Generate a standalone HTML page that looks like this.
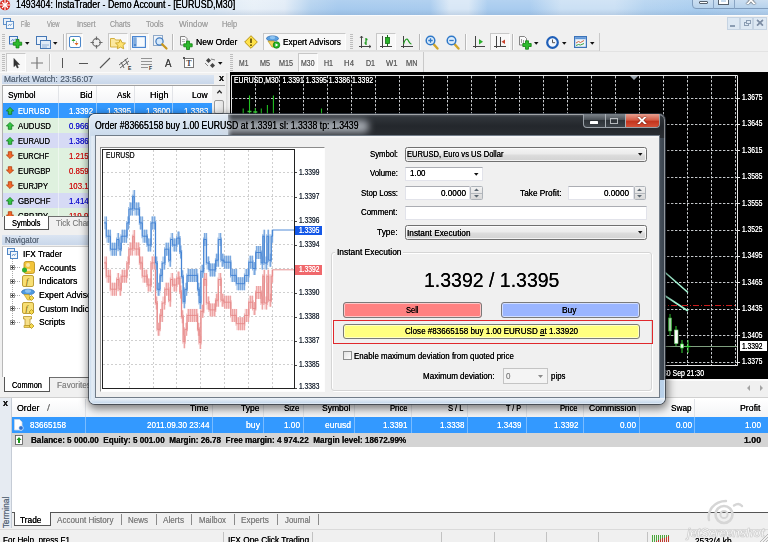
<!DOCTYPE html>
<html><head><meta charset="utf-8"><title>InstaTrader</title>
<style>
*{box-sizing:border-box;margin:0;padding:0}
html,body{width:768px;height:542px;overflow:hidden;background:#f0f0f0}
body{font-family:"Liberation Sans","DejaVu Sans",sans-serif;font-size:9.5px;color:#000;position:relative}
.a{position:absolute}
.t{white-space:pre;text-shadow:0 0 .25px currentColor}
svg{position:absolute;overflow:visible}
</style></head><body>
<div class="a" style="left:0;top:0;width:768px;height:15px;background:linear-gradient(rgba(255,255,255,.12),rgba(255,255,255,0) 60%,rgba(90,120,160,.18) 100%),linear-gradient(90deg,#d9e6f3 0,#dde9f5 28%,#e8f0f8 33%,#e2ecf7 37%,#b4d2ef 40.500%,#a6caee 44%,#a8cbee 56%,#d8e7f6 58.500%,#d8e7f6 61%,#a9ccef 63.500%,#a9ccef 69%,#cbe0f4 73%,#cbe0f4 80%,#b4d3f0 84%,#a9cdef 91%,#b5d3f0 100%)"></div>
<div class="a" style="left:0;top:15px;width:768px;height:1px;background:#fbfcfd"></div>
<svg style="left:0;top:-2px" width="13" height="14" viewBox="0 0 13 14"><circle cx="5" cy="7" r="5.2" fill="#d8261c"/><path d="M2 4l6 6M8 4l-6 6M5 2v10M0 7h10" stroke="#fff" stroke-width="1.1"/></svg>
<span class="a t" style="left:16.0px;top:-1.8px;font-size:10.2px;line-height:13px;color:#000;transform:scaleX(0.867);transform-origin:0 0;">1493404: InstaTrader - Demo Account - [EURUSD,M30]</span>
<div class="a" style="left:692px;top:-6px;width:80px;height:15px;border:1px solid #7f9cbd;border-radius:0 0 0 4px;background:linear-gradient(#d8e6f4,#b7d2ec)"></div>
<div class="a" style="left:713px;top:0px;width:1px;height:9px;background:#8aa5c4"></div>
<div class="a" style="left:734px;top:0px;width:1px;height:9px;background:#8aa5c4"></div>
<div class="a" style="left:699px;top:1px;width:9px;height:3px;background:#fff;border:1px solid #55606c;border-radius:1px"></div>
<div class="a" style="left:719px;top:-3px;width:9px;height:7px;border:2px solid #fff;outline:1px solid #55606c;outline-offset:0"></div>
<span class="a t" style="left:746.0px;top:-8.0px;font-size:12px;line-height:16px;color:#fff;transform:scaleX(1.495);transform-origin:0 0;font-weight:bold;text-shadow:0 0 1px #333,0 0 1px #333;">x</span>
<div class="a" style="left:0px;top:16px;width:768px;height:16px;background:#f0f0f0"></div>
<svg style="left:3px;top:18px" width="11" height="11" viewBox="0 0 11 11"><rect x=".5" y=".5" width="7" height="6" fill="#e9f1fa" stroke="#5d8fc9"/><rect x="3.5" y="3.5" width="7" height="7" fill="#f4f8fc" stroke="#5d8fc9"/><path d="M5 8l1.5-2 1 1.5 1.5-2" stroke="#5d8fc9" fill="none" stroke-width=".8"/></svg>
<span class="a t" style="left:21.0px;top:17.5px;font-size:9.5px;line-height:12px;color:#a3a3a3;transform:scaleX(0.588);transform-origin:0 0;">File</span>
<span class="a t" style="left:47.0px;top:17.5px;font-size:9.5px;line-height:12px;color:#a3a3a3;transform:scaleX(0.612);transform-origin:0 0;">View</span>
<span class="a t" style="left:77.0px;top:17.5px;font-size:9.5px;line-height:12px;color:#a3a3a3;transform:scaleX(0.778);transform-origin:0 0;">Insert</span>
<span class="a t" style="left:110.0px;top:17.5px;font-size:9.5px;line-height:12px;color:#a3a3a3;transform:scaleX(0.733);transform-origin:0 0;">Charts</span>
<span class="a t" style="left:146.0px;top:17.5px;font-size:9.5px;line-height:12px;color:#a3a3a3;transform:scaleX(0.789);transform-origin:0 0;">Tools</span>
<span class="a t" style="left:179.0px;top:17.5px;font-size:9.5px;line-height:12px;color:#a3a3a3;transform:scaleX(0.858);transform-origin:0 0;">Window</span>
<span class="a t" style="left:222.0px;top:17.5px;font-size:9.5px;line-height:12px;color:#a3a3a3;transform:scaleX(0.767);transform-origin:0 0;">Help</span>
<div class="a" style="left:727px;top:17px;width:13px;height:13px;background:#dde8f3;border:1px solid #c5d3e2"></div>
<div class="a" style="left:740px;top:17px;width:13px;height:13px;background:#dde8f3;border:1px solid #c5d3e2"></div>
<div class="a" style="left:753px;top:17px;width:14px;height:13px;background:#dde8f3;border:1px solid #c5d3e2"></div>
<div class="a" style="left:730px;top:25px;width:5px;height:2px;background:#8b9db3"></div>
<div class="a" style="left:743.5px;top:22px;width:5px;height:4px;border:1px solid #8b9db3"></div>
<div class="a" style="left:745.5px;top:20px;width:5px;height:4px;border:1px solid #8b9db3;background:#dde8f3"></div>
<span class="a t" style="left:756.0px;top:15.0px;font-size:12px;line-height:16px;color:#7f8fa6;transform:scaleX(1.140);transform-origin:0 0;font-weight:bold;">×</span>
<div class="a" style="left:0px;top:32px;width:768px;height:20px;background:#f0f0f0"></div>
<div class="a" style="left:0px;top:51px;width:768px;height:1px;background:#e3e3e3"></div>
<div class="a" style="left:0px;top:52px;width:768px;height:21px;background:#f0f0f0"></div>
<div class="a" style="left:2px;top:34px;width:3px;height:16px;background:repeating-linear-gradient(#bdbdbd 0 1px,#f0f0f0 1px 2px)"></div>
<svg style="left:9px;top:35px" width="14" height="14" viewBox="0 0 14 14"><rect x=".5" y="1.500" width="8" height="7.500" fill="#eaf2fb" stroke="#3f74b8"/><path d="M2 6.500l1.500-2 1.500 1 2-2" stroke="#3f74b8" fill="none" stroke-width=".8"/><path d="M7.0 4.499999999999999h3.0v2.7h2.7v3.0h-2.7v2.7h-3.0v-2.7h-2.7v-3.0h2.7z" fill="#2dbb2d" stroke="#0f7f0f" stroke-width=".8" stroke-linejoin="round"/></svg>
<svg style="left:25.3px;top:42.2px" width="4.500" height="2.700" viewBox="0 0 5 3"><path d="M0 0h5L2.5 3z" fill="#111"/></svg>
<svg style="left:36px;top:35px" width="15" height="14" viewBox="0 0 15 14"><rect x=".5" y="1.5" width="10" height="8" fill="#eaf2fb" stroke="#4577b5"/><rect x="4.5" y="5.5" width="10" height="8" fill="#dfeaf7" stroke="#4577b5"/><path d="M6 10h7M6 12h5" stroke="#7fa3d1" stroke-width=".8"/></svg>
<svg style="left:53.3px;top:42.2px" width="4.500" height="2.700" viewBox="0 0 5 3"><path d="M0 0h5L2.5 3z" fill="#111"/></svg>
<div class="a" style="left:63px;top:34px;width:1px;height:16px;background:#b9b9b9"></div>
<div class="a" style="left:64px;top:34px;width:1px;height:16px;background:#fbfbfb"></div>
<div class="a" style="left:66px;top:33px;width:17px;height:18px;background:#f8f8f8;border:1px solid #c8c8c8;border-right-color:#fdfdfd;border-bottom-color:#fdfdfd"></div>
<svg style="left:69px;top:36px" width="12" height="12" viewBox="0 0 12 12"><rect x=".5" y=".5" width="11" height="11" rx="1.5" fill="#fff" stroke="#4b86c9"/><path d="M2.5 5l2-2.5 2 2.5z" fill="#2fa52f"/><path d="M5.5 7l2 2.5 2-2.5z" fill="#e2661e"/><path d="M4.5 5v2M7.5 7v-2" stroke="#999" stroke-width=".7"/></svg>
<svg style="left:90px;top:36px" width="13" height="13" viewBox="0 0 13 13"><circle cx="6.5" cy="6.5" r="3.800" fill="none" stroke="#6a6a6a" stroke-width="1.200"/><path d="M6.5 .5v3.500M6.5 9v3.500M.5 6.5h3.500M9 6.5h3.500" stroke="#6a6a6a" stroke-width="1.200"/></svg>
<div class="a" style="left:108px;top:33px;width:20px;height:18px;background:#f8f8f8;border:1px solid #c8c8c8;border-right-color:#fdfdfd;border-bottom-color:#fdfdfd"></div>
<svg style="left:110px;top:35px" width="16" height="14" viewBox="0 0 16 14"><path d="M.5 3.5h4l1 1.5h4.500v7h-9.500z" fill="#fbe8a0" stroke="#d4b040"/><path d="M10.500 4.500l1.600 3.200 3.400.4-2.500 2.300.7 3.400-3.200-1.700-3.200 1.700.7-3.400-2.500-2.300 3.400-.4z" fill="#fde272" stroke="#c49a18" stroke-width=".8"/></svg>
<div class="a" style="left:130px;top:33px;width:19px;height:18px;background:#f8f8f8;border:1px solid #c8c8c8;border-right-color:#fdfdfd;border-bottom-color:#fdfdfd"></div>
<svg style="left:132px;top:36px" width="14" height="12" viewBox="0 0 14 12"><rect x=".6" y=".6" width="12.800" height="10.800" fill="#f5f9fd" stroke="#3f7fcf" stroke-width="1.100"/><rect x="1.5" y="1.500" width="3" height="9" fill="#4f8ad1"/><path d="M2 3h2M2 5h2M2 7h2" stroke="#dbe8f7" stroke-width=".7"/></svg>
<svg style="left:153px;top:35px" width="15" height="15" viewBox="0 0 15 15"><rect x=".5" y=".5" width="9" height="10" fill="#eef3f9" stroke="#8fa9c8"/><circle cx="6.500" cy="6.500" r="3.600" fill="#d5e8fa" stroke="#3f7ac0" stroke-width="1.200"/><path d="M9.200 9.200l4.300 4.300" stroke="#c9971c" stroke-width="2.200" stroke-linecap="round"/></svg>
<div class="a" style="left:172px;top:34px;width:1px;height:16px;background:#b9b9b9"></div>
<div class="a" style="left:173px;top:34px;width:1px;height:16px;background:#fbfbfb"></div>
<svg style="left:179px;top:35px" width="14" height="15" viewBox="0 0 14 15"><path d="M1.500 1.500h4.500l2 2v6.500h-6.500z" fill="#fafafa" stroke="#777" stroke-width=".9"/><path d="M3 4.500h3M3 6.500h3" stroke="#999" stroke-width=".7"/><path d="M7.5 6.1000000000000005h3.0v2.7h2.7v3.0h-2.7v2.7h-3.0v-2.7h-2.7v-3.0h2.7z" fill="#2dbb2d" stroke="#0f7f0f" stroke-width=".8" stroke-linejoin="round"/></svg>
<span class="a t" style="left:196.0px;top:36.0px;font-size:9.5px;line-height:12px;color:#000;transform:scaleX(0.903);transform-origin:0 0;">New Order</span>
<svg style="left:244px;top:35px" width="14" height="14" viewBox="0 0 14 14"><path d="M7 .7L13.300 7 7 13.300.7 7z" fill="#ffe24a" stroke="#b99412" stroke-width="1"/><path d="M7 3.500v4.500" stroke="#5a4a00" stroke-width="1.600"/><circle cx="7" cy="10.200" r=".9" fill="#5a4a00"/></svg>
<div class="a" style="left:263px;top:33px;width:83px;height:18px;background:#f8f8f8;border:1px solid #c8c8c8;border-right-color:#fdfdfd;border-bottom-color:#fdfdfd"></div>
<svg style="left:266px;top:35px" width="15" height="14" viewBox="0 0 15 14"><ellipse cx="6.500" cy="3.500" rx="6" ry="2.600" fill="#5aa0e0" stroke="#2f6fb5" stroke-width=".8"/><ellipse cx="6.500" cy="2.600" rx="2.800" ry="1.600" fill="#8cc3f2"/><path d="M2 6l4 6h4l-2-6z" fill="#f3d35a" stroke="#b8941a" stroke-width=".7"/><circle cx="10.500" cy="10" r="3.300" fill="#22b422" stroke="#0d7a0d" stroke-width=".7"/><path d="M9.500 8.300v3.400l2.800-1.700z" fill="#fff"/></svg>
<span class="a t" style="left:283.0px;top:36.0px;font-size:9.5px;line-height:12px;color:#000;transform:scaleX(0.879);transform-origin:0 0;">Expert Advisors</span>
<div class="a" style="left:350px;top:34px;width:3px;height:16px;background:repeating-linear-gradient(#bdbdbd 0 1px,#f0f0f0 1px 2px)"></div>
<svg style="left:359px;top:36px" width="12" height="13" viewBox="0 0 12 13"><path d="M2.500 0v12M0 10.500h12" stroke="#444" stroke-width="1"/><path d="M7 2v7M5.500 7h1.500M7 3.500h1.500" stroke="#1f9a1f" stroke-width="1.300"/><path d="M1 2l1.500-2 1.500 2M10 9l2 1.500-2 1.500" fill="none" stroke="#444" stroke-width=".8"/></svg>
<div class="a" style="left:376px;top:33px;width:20px;height:18px;background:#f8f8f8;border:1px solid #c8c8c8;border-right-color:#fdfdfd;border-bottom-color:#fdfdfd"></div>
<svg style="left:380px;top:35px" width="12" height="14" viewBox="0 0 12 14"><path d="M2.500 1v12M0 11.500h12" stroke="#444" stroke-width="1"/><path d="M7.500 0v11" stroke="#156f15" stroke-width="1"/><rect x="5.500" y="2.500" width="4" height="6" fill="#28b428" stroke="#156f15" stroke-width=".8"/></svg>
<svg style="left:401px;top:36px" width="12" height="13" viewBox="0 0 12 13"><path d="M2.500 0v12M0 10.500h12" stroke="#444" stroke-width="1"/><path d="M2.500 8C4 3 6 2 7 4s2 4 3.500 4" fill="none" stroke="#1f9a1f" stroke-width="1.200"/></svg>
<div class="a" style="left:419px;top:34px;width:1px;height:16px;background:#b9b9b9"></div>
<div class="a" style="left:420px;top:34px;width:1px;height:16px;background:#fbfbfb"></div>
<svg style="left:425px;top:35px" width="14" height="15" viewBox="0 0 14 15"><path d="M8 8.500l4.500 5" stroke="#d0a52a" stroke-width="2.400" stroke-linecap="round"/><circle cx="5.500" cy="5.500" r="4.300" fill="#dcecfb" stroke="#2f78c8" stroke-width="1.500"/><path d="M3.300 5.500h4.400M5.500 3.300v4.400" stroke="#2f78c8" stroke-width="1.300"/></svg>
<svg style="left:446px;top:35px" width="14" height="15" viewBox="0 0 14 15"><path d="M8 8.500l4.500 5" stroke="#d0a52a" stroke-width="2.400" stroke-linecap="round"/><circle cx="5.500" cy="5.500" r="4.300" fill="#dcecfb" stroke="#2f78c8" stroke-width="1.500"/><path d="M3.300 5.500h4.400" stroke="#2f78c8" stroke-width="1.300"/></svg>
<div class="a" style="left:465px;top:34px;width:1px;height:16px;background:#b9b9b9"></div>
<div class="a" style="left:466px;top:34px;width:1px;height:16px;background:#fbfbfb"></div>
<svg style="left:473px;top:36px" width="12" height="13" viewBox="0 0 12 13"><path d="M2.500 0v12M0 10.500h12" stroke="#444" stroke-width="1"/><path d="M6 3v5.500l4-2.700z" fill="#2cae2c"/></svg>
<div class="a" style="left:490px;top:33px;width:20px;height:18px;background:#f8f8f8;border:1px solid #c8c8c8;border-right-color:#fdfdfd;border-bottom-color:#fdfdfd"></div>
<svg style="left:494px;top:36px" width="12" height="13" viewBox="0 0 12 13"><path d="M2.500 0v12M0 10.500h12M6.500 1v9" stroke="#444" stroke-width="1"/><path d="M11 3.500v4.500l-3.500-2.200z" fill="#c8402a"/></svg>
<div class="a" style="left:512px;top:34px;width:1px;height:16px;background:#b9b9b9"></div>
<div class="a" style="left:513px;top:34px;width:1px;height:16px;background:#fbfbfb"></div>
<svg style="left:519px;top:35px" width="14" height="15" viewBox="0 0 14 15"><path d="M.5 1.500h5l2 2v6.500h-7z" fill="#fafafa" stroke="#777" stroke-width=".9"/><path d="M2.500 4v4M4.500 5v4" stroke="#888" stroke-width=".8"/><path d="M6.5 5.8h3.0v2.7h2.7v3.0h-2.7v2.7h-3.0v-2.7h-2.7v-3.0h2.7z" fill="#2dbb2d" stroke="#0f7f0f" stroke-width=".8" stroke-linejoin="round"/></svg>
<svg style="left:534.3px;top:42.2px" width="4.500" height="2.700" viewBox="0 0 5 3"><path d="M0 0h5L2.5 3z" fill="#111"/></svg>
<svg style="left:546px;top:36px" width="13" height="13" viewBox="0 0 13 13"><circle cx="6.500" cy="6.500" r="5.300" fill="#f4f8fd" stroke="#1f5fb8" stroke-width="2.200"/><path d="M6.500 3.500v3.200h2.600" stroke="#555" fill="none" stroke-width="1"/></svg>
<svg style="left:562.3px;top:42.2px" width="4.500" height="2.700" viewBox="0 0 5 3"><path d="M0 0h5L2.5 3z" fill="#111"/></svg>
<svg style="left:574px;top:36px" width="13" height="12" viewBox="0 0 13 12"><rect x=".6" y=".6" width="11.800" height="10.800" fill="#eef4fb" stroke="#3b73b9" stroke-width="1.200"/><rect x="1.200" y="1.200" width="10.600" height="2" fill="#5d94d6"/><path d="M2 7l2.500-1.500 2 1 3.500-2" stroke="#d05a2a" fill="none" stroke-width=".9"/><path d="M2 9.500l2.500-1 2 .5 3.500-1.500" stroke="#2a9a2a" fill="none" stroke-width=".9"/></svg>
<svg style="left:590.3px;top:42.2px" width="4.500" height="2.700" viewBox="0 0 5 3"><path d="M0 0h5L2.5 3z" fill="#111"/></svg>
<div class="a" style="left:599px;top:33px;width:1px;height:18px;background:#c9c9c9"></div>
<div class="a" style="left:0px;top:50px;width:599px;height:1px;background:#e0e0e0"></div>
<div class="a" style="left:2px;top:54px;width:3px;height:17px;background:repeating-linear-gradient(#bdbdbd 0 1px,#f0f0f0 1px 2px)"></div>
<div class="a" style="left:6px;top:53px;width:20px;height:19px;background:#f8f8f8;border:1px solid #c8c8c8;border-right-color:#fdfdfd;border-bottom-color:#fdfdfd"></div>
<svg style="left:12.500px;top:57.500px" width="7" height="10.500" viewBox="0 0 8 12"><path d="M1 .5v9.500l2.200-2 1.600 3.500 1.400-.6-1.600-3.400h3z" fill="#333" stroke="#222" stroke-width=".5"/></svg>
<svg style="left:31px;top:57px" width="12" height="12" viewBox="0 0 12 12"><path d="M6 0v12M0 6h12" stroke="#777" stroke-width="1.200"/></svg>
<div class="a" style="left:49px;top:54px;width:1px;height:17px;background:#b9b9b9"></div>
<div class="a" style="left:50px;top:54px;width:1px;height:17px;background:#fbfbfb"></div>
<div class="a" style="left:62px;top:58px;width:1px;height:10px;background:#555"></div>
<div class="a" style="left:79px;top:62.5px;width:9px;height:1px;background:#555"></div>
<svg style="left:100px;top:58px" width="10" height="10" viewBox="0 0 10 10"><path d="M0 10L10 0" stroke="#555" stroke-width="1.100"/></svg>
<svg style="left:119px;top:57px" width="13" height="13" viewBox="0 0 13 13"><path d="M0 8L9 1M1 11L10 4M2 5l3 6M6 2l3 6" stroke="#555" stroke-width=".9"/><text x="9" y="13" font-size="5" font-weight="bold" fill="#333" font-family="Liberation Sans,sans-serif">E</text></svg>
<svg style="left:141px;top:57px" width="12" height="13" viewBox="0 0 12 13"><path d="M0 1.500h11M0 4.500h11M0 7.500h11M0 10.500h7" stroke="#888" stroke-width=".9"/><text x="8" y="13" font-size="5" font-weight="bold" fill="#333" font-family="Liberation Sans,sans-serif">F</text></svg>
<span class="a t" style="left:165.0px;top:56.0px;font-size:10.5px;line-height:14px;color:#444;transform:scaleX(0.927);transform-origin:0 0;">A</span>
<svg style="left:183px;top:57px" width="11" height="12" viewBox="0 0 11 12"><rect x="1.500" y="1.500" width="9" height="9" fill="#fff" stroke="#777"/><rect x="0" y="0" width="2" height="2" fill="#555"/><text x="3.200" y="9.300" font-size="8" font-weight="bold" fill="#444" font-family="Liberation Serif,serif">T</text></svg>
<svg style="left:205px;top:57px" width="11" height="12" viewBox="0 0 11 12"><path d="M1 3.500l2.500-2.500 2.500 2.500-2.500 2.500z" fill="#444"/><path d="M5 8.500l2.500-2.500 2.500 2.500-2.500 2.500z" fill="#444"/><path d="M0 6l3 3M6 2l4 1" stroke="#666" stroke-width=".8"/></svg>
<svg style="left:218.3px;top:62.2px" width="4.500" height="2.700" viewBox="0 0 5 3"><path d="M0 0h5L2.5 3z" fill="#111"/></svg>
<div class="a" style="left:230px;top:54px;width:3px;height:17px;background:repeating-linear-gradient(#bdbdbd 0 1px,#f0f0f0 1px 2px)"></div>
<div class="a" style="left:298px;top:53px;width:20px;height:19px;background:#f8f8f8;border:1px solid #c8c8c8;border-right-color:#fdfdfd;border-bottom-color:#fdfdfd"></div>
<span class="a t" style="left:239.0px;top:57.0px;font-size:9px;line-height:12px;color:#666;transform:scaleX(0.759);transform-origin:0 0;">M1</span>
<span class="a t" style="left:260.0px;top:57.0px;font-size:9px;line-height:12px;color:#666;transform:scaleX(0.799);transform-origin:0 0;">M5</span>
<span class="a t" style="left:279.0px;top:57.0px;font-size:9px;line-height:12px;color:#666;transform:scaleX(0.799);transform-origin:0 0;">M15</span>
<span class="a t" style="left:301.0px;top:57.0px;font-size:9px;line-height:12px;color:#666;transform:scaleX(0.771);transform-origin:0 0;">M30</span>
<span class="a t" style="left:324.0px;top:57.0px;font-size:9px;line-height:12px;color:#666;transform:scaleX(0.782);transform-origin:0 0;">H1</span>
<span class="a t" style="left:343.5px;top:57.0px;font-size:9px;line-height:12px;color:#666;transform:scaleX(0.868);transform-origin:0 0;">H4</span>
<span class="a t" style="left:366.0px;top:57.0px;font-size:9px;line-height:12px;color:#666;transform:scaleX(0.782);transform-origin:0 0;">D1</span>
<span class="a t" style="left:386.0px;top:57.0px;font-size:9px;line-height:12px;color:#666;transform:scaleX(0.852);transform-origin:0 0;">W1</span>
<span class="a t" style="left:406.0px;top:57.0px;font-size:9px;line-height:12px;color:#666;transform:scaleX(0.821);transform-origin:0 0;">MN</span>
<div class="a" style="left:423px;top:52px;width:1px;height:21px;background:#c9c9c9"></div>
<div class="a" style="left:0px;top:72px;width:229px;height:1px;background:#fafafa"></div>
<div class="a" style="left:0px;top:73px;width:229px;height:161px;background:#f0f0f0"></div>
<div class="a" style="left:2px;top:74.5px;width:212px;height:9.5px;background:linear-gradient(#dbe5f2,#c9d7ea)"></div>
<span class="a t" style="left:4.0px;top:72.5px;font-size:9.5px;line-height:12px;color:#5c6a7c;transform:scaleX(0.885);transform-origin:0 0;">Market Watch: 23:56:07</span>
<span class="a t" style="left:218.5px;top:72.0px;font-size:9.5px;line-height:12px;color:#111;transform:scaleX(0.944);transform-origin:0 0;font-weight:bold;">x</span>
<div class="a" style="left:2px;top:85px;width:223px;height:132px;background:#fff;border-left:1px solid #b0b0b0;border-top:1px solid #a0a0a0"></div>
<div class="a" style="left:3px;top:86px;width:209px;height:17px;background:linear-gradient(#ffffff,#f4f5f7)"></div>
<div class="a" style="left:58px;top:86px;width:1px;height:17px;background:#e2e4e8"></div>
<div class="a" style="left:96px;top:86px;width:1px;height:17px;background:#e2e4e8"></div>
<div class="a" style="left:134px;top:86px;width:1px;height:17px;background:#e2e4e8"></div>
<div class="a" style="left:172px;top:86px;width:1px;height:17px;background:#e2e4e8"></div>
<span class="a t" style="left:7.5px;top:88.5px;font-size:9.5px;line-height:12px;color:#000;transform:scaleX(0.868);transform-origin:0 0;">Symbol</span>
<span class="a t" style="left:80.0px;top:88.5px;font-size:9.5px;line-height:12px;color:#000;transform:scaleX(0.910);transform-origin:0 0;">Bid</span>
<span class="a t" style="left:117.0px;top:88.5px;font-size:9.5px;line-height:12px;color:#000;transform:scaleX(0.852);transform-origin:0 0;">Ask</span>
<span class="a t" style="left:150.0px;top:88.5px;font-size:9.5px;line-height:12px;color:#000;transform:scaleX(0.946);transform-origin:0 0;">High</span>
<span class="a t" style="left:192.0px;top:88.5px;font-size:9.5px;line-height:12px;color:#000;transform:scaleX(0.889);transform-origin:0 0;">Low</span>
<div class="a" style="left:212px;top:86px;width:13px;height:131px;background:#f0f0f0"></div>
<svg style="left:217px;top:90px" width="5" height="4" viewBox="0 0 5 4"><path d="M.3 3.200L2.500 .8 4.700 3.200" fill="none" stroke="#333" stroke-width="1.300"/></svg>
<div class="a" style="left:213.5px;top:100px;width:10px;height:14px;background:linear-gradient(90deg,#f6f6f6,#e3e3e3);border:1px solid #9a9a9a;border-radius:2px"></div>
<div class="a" style="left:3px;top:103px;width:209px;height:15px;background:#3399ff;overflow:hidden"></div>
<div class="a" style="left:58px;top:103px;width:1px;height:15px;background:rgba(255,255,255,.45)"></div>
<div class="a" style="left:96px;top:103px;width:1px;height:15px;background:rgba(255,255,255,.45)"></div>
<div class="a" style="left:134px;top:103px;width:1px;height:15px;background:rgba(255,255,255,.45)"></div>
<div class="a" style="left:172px;top:103px;width:1px;height:15px;background:rgba(255,255,255,.45)"></div>
<svg style="left:6px;top:106.7px" width="8" height="8" viewBox="0 0 8 8"><path d="M4 .4L7.600 4H5.700V7.300H2.300V4H.4z" fill="#35c545" stroke="#127a1c" stroke-width=".8" stroke-linejoin="round"/></svg>
<span class="a t" style="left:18.0px;top:104.5px;font-size:9.5px;line-height:12px;color:#fff;transform:scaleX(0.798);transform-origin:0 0;">EURUSD</span>
<span class="a t" style="left:69.0px;top:104.5px;font-size:9.5px;line-height:12px;color:#fff;transform:scaleX(0.826);transform-origin:0 0;">1.3392</span>
<span class="a t" style="left:107.0px;top:104.5px;font-size:9.5px;line-height:12px;color:#fff;transform:scaleX(0.826);transform-origin:0 0;">1.3395</span>
<span class="a t" style="left:145.5px;top:104.5px;font-size:9.5px;line-height:12px;color:#fff;transform:scaleX(0.843);transform-origin:0 0;">1.3600</span>
<span class="a t" style="left:183.5px;top:104.5px;font-size:9.5px;line-height:12px;color:#fff;transform:scaleX(0.843);transform-origin:0 0;">1.3383</span>
<div class="a" style="left:3px;top:118px;width:209px;height:15px;background:#dff1df;overflow:hidden"></div>
<div class="a" style="left:58px;top:118px;width:1px;height:15px;background:rgba(255,255,255,.45)"></div>
<div class="a" style="left:96px;top:118px;width:1px;height:15px;background:rgba(255,255,255,.45)"></div>
<div class="a" style="left:134px;top:118px;width:1px;height:15px;background:rgba(255,255,255,.45)"></div>
<div class="a" style="left:172px;top:118px;width:1px;height:15px;background:rgba(255,255,255,.45)"></div>
<svg style="left:6px;top:121.7px" width="8" height="8" viewBox="0 0 8 8"><path d="M4 .4L7.600 4H5.700V7.300H2.300V4H.4z" fill="#35c545" stroke="#127a1c" stroke-width=".8" stroke-linejoin="round"/></svg>
<span class="a t" style="left:18.0px;top:119.5px;font-size:9.5px;line-height:12px;color:#111;transform:scaleX(0.822);transform-origin:0 0;">AUDUSD</span>
<span class="a t" style="left:69.0px;top:119.5px;font-size:9.5px;line-height:12px;color:#1a1ad0;transform:scaleX(0.826);transform-origin:0 0;">0.9668</span>
<div class="a" style="left:3px;top:133px;width:209px;height:15px;background:#d6daf5;overflow:hidden"></div>
<div class="a" style="left:58px;top:133px;width:1px;height:15px;background:rgba(255,255,255,.45)"></div>
<div class="a" style="left:96px;top:133px;width:1px;height:15px;background:rgba(255,255,255,.45)"></div>
<div class="a" style="left:134px;top:133px;width:1px;height:15px;background:rgba(255,255,255,.45)"></div>
<div class="a" style="left:172px;top:133px;width:1px;height:15px;background:rgba(255,255,255,.45)"></div>
<svg style="left:6px;top:136.7px" width="8" height="8" viewBox="0 0 8 8"><path d="M4 .4L7.600 4H5.700V7.300H2.300V4H.4z" fill="#35c545" stroke="#127a1c" stroke-width=".8" stroke-linejoin="round"/></svg>
<span class="a t" style="left:18.0px;top:134.5px;font-size:9.5px;line-height:12px;color:#111;transform:scaleX(0.798);transform-origin:0 0;">EURAUD</span>
<span class="a t" style="left:69.0px;top:134.5px;font-size:9.5px;line-height:12px;color:#1a1ad0;transform:scaleX(0.826);transform-origin:0 0;">1.3861</span>
<div class="a" style="left:3px;top:148px;width:209px;height:15px;background:#dff1df;overflow:hidden"></div>
<div class="a" style="left:58px;top:148px;width:1px;height:15px;background:rgba(255,255,255,.45)"></div>
<div class="a" style="left:96px;top:148px;width:1px;height:15px;background:rgba(255,255,255,.45)"></div>
<div class="a" style="left:134px;top:148px;width:1px;height:15px;background:rgba(255,255,255,.45)"></div>
<div class="a" style="left:172px;top:148px;width:1px;height:15px;background:rgba(255,255,255,.45)"></div>
<svg style="left:6px;top:151.3px" width="8" height="8" viewBox="0 0 8 8"><path d="M4 7.600L7.600 4H5.700V.7H2.300V4H.4z" fill="#f2682a" stroke="#b23a0a" stroke-width=".8" stroke-linejoin="round"/></svg>
<span class="a t" style="left:18.0px;top:149.5px;font-size:9.5px;line-height:12px;color:#111;transform:scaleX(0.783);transform-origin:0 0;">EURCHF</span>
<span class="a t" style="left:69.0px;top:149.5px;font-size:9.5px;line-height:12px;color:#d01a1a;transform:scaleX(0.826);transform-origin:0 0;">1.2156</span>
<div class="a" style="left:3px;top:163px;width:209px;height:15px;background:#dff1df;overflow:hidden"></div>
<div class="a" style="left:58px;top:163px;width:1px;height:15px;background:rgba(255,255,255,.45)"></div>
<div class="a" style="left:96px;top:163px;width:1px;height:15px;background:rgba(255,255,255,.45)"></div>
<div class="a" style="left:134px;top:163px;width:1px;height:15px;background:rgba(255,255,255,.45)"></div>
<div class="a" style="left:172px;top:163px;width:1px;height:15px;background:rgba(255,255,255,.45)"></div>
<svg style="left:6px;top:166.3px" width="8" height="8" viewBox="0 0 8 8"><path d="M4 7.600L7.600 4H5.700V.7H2.300V4H.4z" fill="#f2682a" stroke="#b23a0a" stroke-width=".8" stroke-linejoin="round"/></svg>
<span class="a t" style="left:18.0px;top:164.5px;font-size:9.5px;line-height:12px;color:#111;transform:scaleX(0.810);transform-origin:0 0;">EURGBP</span>
<span class="a t" style="left:69.0px;top:164.5px;font-size:9.5px;line-height:12px;color:#d01a1a;transform:scaleX(0.826);transform-origin:0 0;">0.8592</span>
<div class="a" style="left:3px;top:178px;width:209px;height:15px;background:#dff1df;overflow:hidden"></div>
<div class="a" style="left:58px;top:178px;width:1px;height:15px;background:rgba(255,255,255,.45)"></div>
<div class="a" style="left:96px;top:178px;width:1px;height:15px;background:rgba(255,255,255,.45)"></div>
<div class="a" style="left:134px;top:178px;width:1px;height:15px;background:rgba(255,255,255,.45)"></div>
<div class="a" style="left:172px;top:178px;width:1px;height:15px;background:rgba(255,255,255,.45)"></div>
<svg style="left:6px;top:181.3px" width="8" height="8" viewBox="0 0 8 8"><path d="M4 7.600L7.600 4H5.700V.7H2.300V4H.4z" fill="#f2682a" stroke="#b23a0a" stroke-width=".8" stroke-linejoin="round"/></svg>
<span class="a t" style="left:18.0px;top:179.5px;font-size:9.5px;line-height:12px;color:#111;transform:scaleX(0.800);transform-origin:0 0;">EURJPY</span>
<span class="a t" style="left:69.0px;top:179.5px;font-size:9.5px;line-height:12px;color:#d01a1a;transform:scaleX(0.826);transform-origin:0 0;">103.18</span>
<div class="a" style="left:3px;top:193px;width:209px;height:15px;background:#d6daf5;overflow:hidden"></div>
<div class="a" style="left:58px;top:193px;width:1px;height:15px;background:rgba(255,255,255,.45)"></div>
<div class="a" style="left:96px;top:193px;width:1px;height:15px;background:rgba(255,255,255,.45)"></div>
<div class="a" style="left:134px;top:193px;width:1px;height:15px;background:rgba(255,255,255,.45)"></div>
<div class="a" style="left:172px;top:193px;width:1px;height:15px;background:rgba(255,255,255,.45)"></div>
<svg style="left:6px;top:196.7px" width="8" height="8" viewBox="0 0 8 8"><path d="M4 .4L7.600 4H5.700V7.300H2.300V4H.4z" fill="#35c545" stroke="#127a1c" stroke-width=".8" stroke-linejoin="round"/></svg>
<span class="a t" style="left:18.0px;top:194.5px;font-size:9.5px;line-height:12px;color:#111;transform:scaleX(0.821);transform-origin:0 0;">GBPCHF</span>
<span class="a t" style="left:69.0px;top:194.5px;font-size:9.5px;line-height:12px;color:#1a1ad0;transform:scaleX(0.826);transform-origin:0 0;">1.4146</span>
<div class="a" style="left:3px;top:208px;width:209px;height:8px;background:#dff1df;overflow:hidden"></div>
<div class="a" style="left:58px;top:208px;width:1px;height:8px;background:rgba(255,255,255,.45)"></div>
<div class="a" style="left:96px;top:208px;width:1px;height:8px;background:rgba(255,255,255,.45)"></div>
<div class="a" style="left:134px;top:208px;width:1px;height:8px;background:rgba(255,255,255,.45)"></div>
<div class="a" style="left:172px;top:208px;width:1px;height:8px;background:rgba(255,255,255,.45)"></div>
<div class="a" style="left:3px;top:208px;width:210px;height:8px;overflow:hidden">
<svg style="left:3px;top:3.3000000000000114px" width="8" height="8" viewBox="0 0 8 8"><path d="M4 7.600L7.600 4H5.700V.7H2.300V4H.4z" fill="#f2682a" stroke="#b23a0a" stroke-width=".8" stroke-linejoin="round"/></svg>
<span class="a t" style="left:15.0px;top:1.5px;font-size:9.5px;line-height:12px;color:#111;transform:scaleX(0.800);transform-origin:0 0;">GBPJPY</span>
<span class="a t" style="left:66.0px;top:1.5px;font-size:9.5px;line-height:12px;color:#d01a1a;transform:scaleX(0.846);transform-origin:0 0;">119.98</span>
</div>
<div class="a" style="left:4px;top:216px;width:225px;height:1px;background:#6e6e6e"></div>
<div class="a" style="left:0px;top:217px;width:229px;height:17px;background:#f0f0f0"></div>
<div class="a" style="left:4px;top:216px;width:45px;height:14px;background:#fff;border:1px solid #555;border-top:none"></div>
<span class="a t" style="left:11.5px;top:216.5px;font-size:9.5px;line-height:12px;color:#000;transform:scaleX(0.782);transform-origin:0 0;">Symbols</span>
<span class="a t" style="left:56.0px;top:216.5px;font-size:9.5px;line-height:12px;color:#8a8a8a;transform:scaleX(0.838);transform-origin:0 0;">Tick Chart</span>
<div class="a" style="left:0px;top:234px;width:229px;height:163px;background:#f0f0f0"></div>
<div class="a" style="left:2px;top:235px;width:212px;height:10px;background:linear-gradient(#dbe5f2,#c9d7ea)"></div>
<span class="a t" style="left:4.5px;top:234.0px;font-size:9.5px;line-height:12px;color:#5c6a7c;transform:scaleX(0.836);transform-origin:0 0;">Navigator</span>
<div class="a" style="left:2px;top:246px;width:223px;height:131px;background:#fff;border-left:1px solid #b8b8b8;border-top:1px solid #d0d0d0"></div>
<svg style="left:7px;top:248px" width="11" height="11" viewBox="0 0 11 11"><rect x=".5" y=".5" width="7" height="6" fill="#e9f1fa" stroke="#4f86c6"/><rect x="3.500" y="3.500" width="7" height="7" fill="#f4f8fc" stroke="#4f86c6"/><path d="M5 8l1.500-2 1 1.500 1.500-2" stroke="#4f86c6" fill="none" stroke-width=".8"/></svg>
<span class="a t" style="left:23.0px;top:248.0px;font-size:9.5px;line-height:12px;color:#000;transform:scaleX(0.869);transform-origin:0 0;">IFX Trader</span>
<div class="a" style="left:12px;top:259px;width:1px;height:61px;background:repeating-linear-gradient(#aaa 0 1px,#fff 1px 2px)"></div>
<div class="a" style="left:10px;top:265.0px;width:5px;height:5px;border:1px solid #9a9a9a;background:#fff"></div>
<div class="a" style="left:11px;top:267.0px;width:3px;height:1px;background:#444"></div>
<div class="a" style="left:12px;top:266.0px;width:1px;height:3px;background:#444"></div>
<div class="a" style="left:15px;top:267.0px;width:5px;height:1px;background:repeating-linear-gradient(90deg,#aaa 0 1px,#fff 1px 2px)"></div>
<div class="a" style="left:10px;top:278.5px;width:5px;height:5px;border:1px solid #9a9a9a;background:#fff"></div>
<div class="a" style="left:11px;top:280.5px;width:3px;height:1px;background:#444"></div>
<div class="a" style="left:12px;top:279.5px;width:1px;height:3px;background:#444"></div>
<div class="a" style="left:15px;top:280.5px;width:5px;height:1px;background:repeating-linear-gradient(90deg,#aaa 0 1px,#fff 1px 2px)"></div>
<div class="a" style="left:10px;top:292.5px;width:5px;height:5px;border:1px solid #9a9a9a;background:#fff"></div>
<div class="a" style="left:11px;top:294.5px;width:3px;height:1px;background:#444"></div>
<div class="a" style="left:12px;top:293.5px;width:1px;height:3px;background:#444"></div>
<div class="a" style="left:15px;top:294.5px;width:5px;height:1px;background:repeating-linear-gradient(90deg,#aaa 0 1px,#fff 1px 2px)"></div>
<div class="a" style="left:10px;top:306.0px;width:5px;height:5px;border:1px solid #9a9a9a;background:#fff"></div>
<div class="a" style="left:11px;top:308.0px;width:3px;height:1px;background:#444"></div>
<div class="a" style="left:12px;top:307.0px;width:1px;height:3px;background:#444"></div>
<div class="a" style="left:15px;top:308.0px;width:5px;height:1px;background:repeating-linear-gradient(90deg,#aaa 0 1px,#fff 1px 2px)"></div>
<div class="a" style="left:10px;top:319.5px;width:5px;height:5px;border:1px solid #9a9a9a;background:#fff"></div>
<div class="a" style="left:11px;top:321.5px;width:3px;height:1px;background:#444"></div>
<div class="a" style="left:12px;top:320.5px;width:1px;height:3px;background:#444"></div>
<div class="a" style="left:15px;top:321.5px;width:5px;height:1px;background:repeating-linear-gradient(90deg,#aaa 0 1px,#fff 1px 2px)"></div>
<svg style="left:21px;top:261px" width="14" height="13" viewBox="0 0 14 13"><rect x="3" y=".5" width="10.500" height="12" rx="2" fill="#f2c43a" stroke="#b48a14" stroke-width=".8"/><circle cx="7" cy="4" r="2" fill="#fbe7a8"/><path d="M4 10c0-3 6-3 6 0z" fill="#fbe7a8"/><circle cx="3.500" cy="9" r="2.500" fill="#30b030"/></svg>
<svg style="left:22px;top:275px" width="12" height="12" viewBox="0 0 12 12"><rect x=".5" y=".5" width="11" height="11" rx="1.500" fill="#f8df74" stroke="#b8962a" stroke-width=".9"/><text x="4" y="9" font-size="8" font-style="italic" font-family="Liberation Serif,serif" fill="#6a5200">f</text></svg>
<svg style="left:21px;top:288px" width="14" height="13" viewBox="0 0 14 13"><ellipse cx="7" cy="4" rx="6.500" ry="2.800" fill="#4f9ae0" stroke="#2f6fb5" stroke-width=".7"/><ellipse cx="7" cy="3" rx="3" ry="1.800" fill="#8cc3f2"/><path d="M3 6.500l3.500 5.500h3.500l-2-5.500z" fill="#f3d35a" stroke="#b8941a" stroke-width=".6"/><path d="M10.500 7.500l2.500 2.500-2.500 2.500-2.500-2.500z" fill="#f5d94e" stroke="#a8860f" stroke-width=".7"/></svg>
<svg style="left:22px;top:302px" width="13" height="13" viewBox="0 0 13 13"><rect x=".5" y=".5" width="11" height="11" rx="1.500" fill="#f8df74" stroke="#b8962a" stroke-width=".9"/><text x="3.500" y="9" font-size="8" font-style="italic" font-family="Liberation Serif,serif" fill="#6a5200">f</text><path d="M9.500 7.500l2.500 2.500-2.500 2.500-2.500-2.500z" fill="#f5d94e" stroke="#a8860f" stroke-width=".7"/></svg>
<svg style="left:22px;top:316px" width="13" height="13" viewBox="0 0 13 13"><path d="M1.500 .5h8v2.500h-1.500v6.500h-5v-6.500h-1.500z" fill="#f7e08a" stroke="#b8962a" stroke-width=".8"/><path d="M2 9.500h7v2h-7z" fill="#f3d35a" stroke="#b8962a" stroke-width=".7"/><path d="M9.500 7.500l2.500 2.500-2.500 2.500-2.500-2.500z" fill="#f5d94e" stroke="#a8860f" stroke-width=".7"/></svg>
<span class="a t" style="left:39.0px;top:261.5px;font-size:9.5px;line-height:12px;color:#000;transform:scaleX(0.947);transform-origin:0 0;">Accounts</span>
<span class="a t" style="left:39.0px;top:275.0px;font-size:9.5px;line-height:12px;color:#000;transform:scaleX(0.935);transform-origin:0 0;">Indicators</span>
<span class="a t" style="left:39.0px;top:289.0px;font-size:9.5px;line-height:12px;color:#000;transform:scaleX(0.909);transform-origin:0 0;">Expert Advisors</span>
<span class="a t" style="left:39.0px;top:302.5px;font-size:9.5px;line-height:12px;color:#000;transform:scaleX(0.901);transform-origin:0 0;">Custom Indicators</span>
<span class="a t" style="left:39.0px;top:316.0px;font-size:9.5px;line-height:12px;color:#000;transform:scaleX(0.895);transform-origin:0 0;">Scripts</span>
<div class="a" style="left:4px;top:377px;width:225px;height:1px;background:#6e6e6e"></div>
<div class="a" style="left:0px;top:378px;width:229px;height:19px;background:#f0f0f0"></div>
<div class="a" style="left:4px;top:377px;width:46px;height:15px;background:#fff;border:1px solid #555;border-top:none"></div>
<span class="a t" style="left:11.5px;top:378.5px;font-size:9.5px;line-height:12px;color:#000;transform:scaleX(0.778);transform-origin:0 0;">Common</span>
<span class="a t" style="left:57.0px;top:378.5px;font-size:9.5px;line-height:12px;color:#8a8a8a;transform:scaleX(0.870);transform-origin:0 0;">Favorites</span>
<div class="a" style="left:226px;top:73px;width:3px;height:324px;background:linear-gradient(90deg,#d9d9d9,#f0f0f0)"></div>
<div class="a" style="left:229.5px;top:72px;width:538.5px;height:307px;background:#000"></div>
<div class="a" style="left:229px;top:379px;width:539px;height:18px;background:#f0f0f0"></div>
<div class="a" style="left:229px;top:379px;width:539px;height:1.5px;background:#fbfbfb"></div>
<svg style="left:0;top:0" width="768" height="542" viewBox="0 0 768 542"><path d="M735.5 76V365" stroke="#c6c9cc" stroke-width="1" stroke-dasharray="2.400 1.600"/><path d="M711.5 76V365" stroke="#c6c9cc" stroke-width="1" stroke-dasharray="2.400 1.600"/><path d="M687.5 76V365" stroke="#c6c9cc" stroke-width="1" stroke-dasharray="2.400 1.600"/><path d="M663.5 76V365" stroke="#c6c9cc" stroke-width="1" stroke-dasharray="2.400 1.600"/><path d="M639.5 76V365" stroke="#c6c9cc" stroke-width="1" stroke-dasharray="2.400 1.600"/><path d="M615.5 76V365" stroke="#c6c9cc" stroke-width="1" stroke-dasharray="2.400 1.600"/><path d="M591.5 76V365" stroke="#c6c9cc" stroke-width="1" stroke-dasharray="2.400 1.600"/><path d="M567.5 76V365" stroke="#c6c9cc" stroke-width="1" stroke-dasharray="2.400 1.600"/><path d="M543.5 76V365" stroke="#c6c9cc" stroke-width="1" stroke-dasharray="2.400 1.600"/><path d="M519.5 76V365" stroke="#c6c9cc" stroke-width="1" stroke-dasharray="2.400 1.600"/><path d="M495.5 76V365" stroke="#c6c9cc" stroke-width="1" stroke-dasharray="2.400 1.600"/><path d="M471.5 76V365" stroke="#c6c9cc" stroke-width="1" stroke-dasharray="2.400 1.600"/><path d="M447.5 76V365" stroke="#c6c9cc" stroke-width="1" stroke-dasharray="2.400 1.600"/><path d="M423.5 76V365" stroke="#c6c9cc" stroke-width="1" stroke-dasharray="2.400 1.600"/><path d="M399.5 76V365" stroke="#c6c9cc" stroke-width="1" stroke-dasharray="2.400 1.600"/><path d="M375.5 76V365" stroke="#c6c9cc" stroke-width="1" stroke-dasharray="2.400 1.600"/><path d="M351.5 76V365" stroke="#c6c9cc" stroke-width="1" stroke-dasharray="2.400 1.600"/><path d="M327.5 76V365" stroke="#c6c9cc" stroke-width="1" stroke-dasharray="2.400 1.600"/><path d="M303.5 76V365" stroke="#c6c9cc" stroke-width="1" stroke-dasharray="2.400 1.600"/><path d="M279.5 76V365" stroke="#c6c9cc" stroke-width="1" stroke-dasharray="2.400 1.600"/><path d="M255.5 76V365" stroke="#c6c9cc" stroke-width="1" stroke-dasharray="2.400 1.600"/><path d="M231 98.5H737" stroke="#c6c9cc" stroke-width="1" stroke-dasharray="2.400 1.600"/><path d="M231 124.5H737" stroke="#c6c9cc" stroke-width="1" stroke-dasharray="2.400 1.600"/><path d="M231 150.5H737" stroke="#c6c9cc" stroke-width="1" stroke-dasharray="2.400 1.600"/><path d="M231 177.5H737" stroke="#c6c9cc" stroke-width="1" stroke-dasharray="2.400 1.600"/><path d="M231 203.5H737" stroke="#c6c9cc" stroke-width="1" stroke-dasharray="2.400 1.600"/><path d="M231 230.5H737" stroke="#c6c9cc" stroke-width="1" stroke-dasharray="2.400 1.600"/><path d="M231 256.5H737" stroke="#c6c9cc" stroke-width="1" stroke-dasharray="2.400 1.600"/><path d="M231 282.5H737" stroke="#c6c9cc" stroke-width="1" stroke-dasharray="2.400 1.600"/><path d="M231 309.5H737" stroke="#c6c9cc" stroke-width="1" stroke-dasharray="2.400 1.600"/><path d="M231 335.5H737" stroke="#c6c9cc" stroke-width="1" stroke-dasharray="2.400 1.600"/><path d="M231 362.5H737" stroke="#c6c9cc" stroke-width="1" stroke-dasharray="2.400 1.600"/><path d="M231.500 75.500H737.500V365.500H231.500z" fill="none" stroke="#e8e8e8" stroke-width="1"/><path d="M737 98.5h3" stroke="#e8e8e8"/><path d="M737 124.5h3" stroke="#e8e8e8"/><path d="M737 150.5h3" stroke="#e8e8e8"/><path d="M737 177.5h3" stroke="#e8e8e8"/><path d="M737 203.5h3" stroke="#e8e8e8"/><path d="M737 230.5h3" stroke="#e8e8e8"/><path d="M737 256.5h3" stroke="#e8e8e8"/><path d="M737 282.5h3" stroke="#e8e8e8"/><path d="M737 309.5h3" stroke="#e8e8e8"/><path d="M737 335.5h3" stroke="#e8e8e8"/><path d="M737 362.5h3" stroke="#e8e8e8"/><path d="M231 305.500H737" stroke="#c81e1e" stroke-width="1" stroke-dasharray="6 2 1 2"/><path d="M231 346.500H737" stroke="#7f9f7f" stroke-width="1"/></svg>
<svg style="left:0;top:0" width="768" height="542" viewBox="0 0 768 542"><path d="M630 76h8l-4 4z" fill="#9aa4ae"/><path d="M243.2 108.5V114" stroke="#22c322" stroke-width="1.100"/><path d="M249.5 95.4V114" stroke="#22c322" stroke-width="1.100"/><path d="M255.3 108V114" stroke="#22c322" stroke-width="1.100"/><path d="M261.3 108.5V114" stroke="#22c322" stroke-width="1.100"/><path d="M267.4 105V114" stroke="#22c322" stroke-width="1.100"/><path d="M273.4 95.4V114" stroke="#22c322" stroke-width="1.100"/><path d="M321.5 108.5V114" stroke="#22c322" stroke-width="1.100"/><path d="M247.500 111.500h4M253.300 112h4" stroke="#3fe03f" stroke-width="1.500"/><path d="M660 268L688 292.500" stroke="#a6f7d6" stroke-width="1.600"/><path d="M660 292.500L688 311" stroke="#a6f7d6" stroke-width="1.600"/><path d="M670 314V336M676 326V346M682 340V353M688 340V353" stroke="#35d835" stroke-width="1"/><rect x="668.500" y="318" width="3" height="13" fill="#c9f2c9" stroke="#35d835" stroke-width=".6"/><rect x="674.500" y="330" width="3.500" height="13.500" fill="#fff" stroke="#7be07b" stroke-width=".6"/><rect x="680.500" y="344" width="3" height="4" fill="#e8ffe8" stroke="#35d835" stroke-width=".6"/><path d="M685.500 346.500h5" stroke="#35d835" stroke-width="1.200"/></svg>
<span class="a t" style="left:234.3px;top:75.3px;font-size:8.8px;line-height:11px;color:#fff;transform:scaleX(0.788);transform-origin:0 0;">EURUSD,M30  1.3391 1.3395 1.3386 1.3392</span>
<span class="a t" style="left:742.0px;top:92.0px;font-size:8.8px;line-height:11px;color:#fff;transform:scaleX(0.762);transform-origin:0 0;text-shadow:0 0 .6px #fff;">1.3675</span>
<span class="a t" style="left:742.0px;top:118.4px;font-size:8.8px;line-height:11px;color:#fff;transform:scaleX(0.762);transform-origin:0 0;text-shadow:0 0 .6px #fff;">1.3645</span>
<span class="a t" style="left:742.0px;top:144.8px;font-size:8.8px;line-height:11px;color:#fff;transform:scaleX(0.762);transform-origin:0 0;text-shadow:0 0 .6px #fff;">1.3615</span>
<span class="a t" style="left:742.0px;top:171.2px;font-size:8.8px;line-height:11px;color:#fff;transform:scaleX(0.762);transform-origin:0 0;text-shadow:0 0 .6px #fff;">1.3585</span>
<span class="a t" style="left:742.0px;top:197.6px;font-size:8.8px;line-height:11px;color:#fff;transform:scaleX(0.762);transform-origin:0 0;text-shadow:0 0 .6px #fff;">1.3555</span>
<span class="a t" style="left:742.0px;top:224.0px;font-size:8.8px;line-height:11px;color:#fff;transform:scaleX(0.762);transform-origin:0 0;text-shadow:0 0 .6px #fff;">1.3525</span>
<span class="a t" style="left:742.0px;top:250.4px;font-size:8.8px;line-height:11px;color:#fff;transform:scaleX(0.762);transform-origin:0 0;text-shadow:0 0 .6px #fff;">1.3495</span>
<span class="a t" style="left:742.0px;top:276.8px;font-size:8.8px;line-height:11px;color:#fff;transform:scaleX(0.762);transform-origin:0 0;text-shadow:0 0 .6px #fff;">1.3465</span>
<span class="a t" style="left:742.0px;top:303.2px;font-size:8.8px;line-height:11px;color:#fff;transform:scaleX(0.762);transform-origin:0 0;text-shadow:0 0 .6px #fff;">1.3435</span>
<span class="a t" style="left:742.0px;top:329.6px;font-size:8.8px;line-height:11px;color:#fff;transform:scaleX(0.762);transform-origin:0 0;text-shadow:0 0 .6px #fff;">1.3405</span>
<span class="a t" style="left:742.0px;top:356.0px;font-size:8.8px;line-height:11px;color:#fff;transform:scaleX(0.762);transform-origin:0 0;text-shadow:0 0 .6px #fff;">1.3375</span>
<div class="a" style="left:740px;top:341px;width:27px;height:10px;background:#fff"></div>
<span class="a t" style="left:742.0px;top:340.5px;font-size:8.8px;line-height:11px;color:#000;transform:scaleX(0.762);transform-origin:0 0;">1.3392</span>
<span class="a t" style="left:663.0px;top:366.8px;font-size:9px;line-height:12px;color:#fff;transform:scaleX(0.765);transform-origin:0 0;text-shadow:0 0 .6px #fff;">30 Sep 21:30</span>
<svg style="left:747px;top:385px" width="16" height="6" viewBox="0 0 16 6"><path d="M3 0v6L0 3zM13 0v6L16 3z" fill="#a4a4a4"/></svg>
<div class="a" style="left:0px;top:397px;width:768px;height:1px;background:#d0d0d0"></div>
<div class="a" style="left:0px;top:398px;width:768px;height:130px;background:#fff"></div>
<div class="a" style="left:0px;top:398px;width:12px;height:130px;background:#e6ebf2;border-right:1px solid #c5ccd6"></div>
<span class="a t" style="left:2.5px;top:396.8px;font-size:9.5px;line-height:12px;color:#111;transform:scaleX(0.944);transform-origin:0 0;font-weight:bold;">x</span>
<span class="a t" style="left:-12.500px;top:506.500px;width:36px;font-size:9px;line-height:11px;color:#5c6a7c;transform:rotate(-90deg) scaleX(.93);text-align:center">Terminal</span>
<div class="a" style="left:12px;top:399px;width:756px;height:18px;background:linear-gradient(#fff,#f3f4f6)"></div>
<div class="a" style="left:85px;top:399px;width:1px;height:18px;background:#e0e3e8"></div>
<div class="a" style="left:211.5px;top:399px;width:1px;height:18px;background:#e0e3e8"></div>
<div class="a" style="left:262.5px;top:399px;width:1px;height:18px;background:#e0e3e8"></div>
<div class="a" style="left:303px;top:399px;width:1px;height:18px;background:#e0e3e8"></div>
<div class="a" style="left:354px;top:399px;width:1px;height:18px;background:#e0e3e8"></div>
<div class="a" style="left:411px;top:399px;width:1px;height:18px;background:#e0e3e8"></div>
<div class="a" style="left:467px;top:399px;width:1px;height:18px;background:#e0e3e8"></div>
<div class="a" style="left:525.5px;top:399px;width:1px;height:18px;background:#e0e3e8"></div>
<div class="a" style="left:582.5px;top:399px;width:1px;height:18px;background:#e0e3e8"></div>
<div class="a" style="left:639px;top:399px;width:1px;height:18px;background:#e0e3e8"></div>
<div class="a" style="left:694px;top:399px;width:1px;height:18px;background:#e0e3e8"></div>
<span class="a t" style="left:16.5px;top:402.0px;font-size:9.5px;line-height:12px;color:#000;transform:scaleX(0.926);transform-origin:0 0;">Order</span>
<span class="a t" style="left:47.0px;top:402.0px;font-size:9.5px;line-height:12px;color:#777;transform:scaleX(1.136);transform-origin:0 0;">/</span>
<span class="a t" style="left:190.0px;top:402.0px;font-size:9.5px;line-height:12px;color:#000;transform:scaleX(0.891);transform-origin:0 0;">Time</span>
<span class="a t" style="left:241.0px;top:402.0px;font-size:9.5px;line-height:12px;color:#000;transform:scaleX(0.898);transform-origin:0 0;">Type</span>
<span class="a t" style="left:284.0px;top:402.0px;font-size:9.5px;line-height:12px;color:#000;transform:scaleX(0.839);transform-origin:0 0;">Size</span>
<span class="a t" style="left:322.0px;top:402.0px;font-size:9.5px;line-height:12px;color:#000;transform:scaleX(0.899);transform-origin:0 0;">Symbol</span>
<span class="a t" style="left:390.0px;top:402.0px;font-size:9.5px;line-height:12px;color:#000;transform:scaleX(0.808);transform-origin:0 0;">Price</span>
<span class="a t" style="left:448.0px;top:402.0px;font-size:9.5px;line-height:12px;color:#000;transform:scaleX(0.793);transform-origin:0 0;">S / L</span>
<span class="a t" style="left:505.5px;top:402.0px;font-size:9.5px;line-height:12px;color:#000;transform:scaleX(0.754);transform-origin:0 0;">T / P</span>
<span class="a t" style="left:560.0px;top:402.0px;font-size:9.5px;line-height:12px;color:#000;transform:scaleX(0.808);transform-origin:0 0;">Price</span>
<span class="a t" style="left:588.5px;top:402.0px;font-size:9.5px;line-height:12px;color:#000;transform:scaleX(0.899);transform-origin:0 0;">Commission</span>
<span class="a t" style="left:671.0px;top:402.0px;font-size:9.5px;line-height:12px;color:#000;transform:scaleX(0.863);transform-origin:0 0;">Swap</span>
<span class="a t" style="left:740.0px;top:402.0px;font-size:9.5px;line-height:12px;color:#000;transform:scaleX(0.924);transform-origin:0 0;">Profit</span>
<div class="a" style="left:12px;top:417px;width:756px;height:16px;background:#3399ff"></div>
<div class="a" style="left:85px;top:417px;width:1px;height:16px;background:rgba(255,255,255,.35)"></div>
<div class="a" style="left:211.5px;top:417px;width:1px;height:16px;background:rgba(255,255,255,.35)"></div>
<div class="a" style="left:262.5px;top:417px;width:1px;height:16px;background:rgba(255,255,255,.35)"></div>
<div class="a" style="left:303px;top:417px;width:1px;height:16px;background:rgba(255,255,255,.35)"></div>
<div class="a" style="left:354px;top:417px;width:1px;height:16px;background:rgba(255,255,255,.35)"></div>
<div class="a" style="left:411px;top:417px;width:1px;height:16px;background:rgba(255,255,255,.35)"></div>
<div class="a" style="left:467px;top:417px;width:1px;height:16px;background:rgba(255,255,255,.35)"></div>
<div class="a" style="left:525.5px;top:417px;width:1px;height:16px;background:rgba(255,255,255,.35)"></div>
<div class="a" style="left:582.5px;top:417px;width:1px;height:16px;background:rgba(255,255,255,.35)"></div>
<div class="a" style="left:639px;top:417px;width:1px;height:16px;background:rgba(255,255,255,.35)"></div>
<div class="a" style="left:694px;top:417px;width:1px;height:16px;background:rgba(255,255,255,.35)"></div>
<svg style="left:14px;top:419px" width="10" height="12" viewBox="0 0 10 12"><path d="M.5 .5h5l2.500 2.500v8h-7.500z" fill="#fff" stroke="#cfd8e4" stroke-width=".8"/><circle cx="7" cy="9" r="2.300" fill="#2a6fd0" stroke="#fff" stroke-width=".6"/></svg>
<span class="a t" style="left:30.0px;top:419.0px;font-size:9.5px;line-height:12px;color:#fff;transform:scaleX(0.851);transform-origin:0 0;">83665158</span>
<span class="a t" style="left:146.5px;top:419.0px;font-size:9.5px;line-height:12px;color:#fff;transform:scaleX(0.853);transform-origin:0 0;">2011.09.30 23:44</span>
<span class="a t" style="left:246.0px;top:419.0px;font-size:9.5px;line-height:12px;color:#fff;transform:scaleX(0.913);transform-origin:0 0;">buy</span>
<span class="a t" style="left:284.0px;top:419.0px;font-size:9.5px;line-height:12px;color:#fff;transform:scaleX(0.865);transform-origin:0 0;">1.00</span>
<span class="a t" style="left:325.0px;top:419.0px;font-size:9.5px;line-height:12px;color:#fff;transform:scaleX(0.895);transform-origin:0 0;">eurusd</span>
<span class="a t" style="left:383.0px;top:419.0px;font-size:9.5px;line-height:12px;color:#fff;transform:scaleX(0.843);transform-origin:0 0;">1.3391</span>
<span class="a t" style="left:439.5px;top:419.0px;font-size:9.5px;line-height:12px;color:#fff;transform:scaleX(0.843);transform-origin:0 0;">1.3338</span>
<span class="a t" style="left:496.5px;top:419.0px;font-size:9.5px;line-height:12px;color:#fff;transform:scaleX(0.843);transform-origin:0 0;">1.3439</span>
<span class="a t" style="left:553.5px;top:419.0px;font-size:9.5px;line-height:12px;color:#fff;transform:scaleX(0.843);transform-origin:0 0;">1.3392</span>
<span class="a t" style="left:620.0px;top:419.0px;font-size:9.5px;line-height:12px;color:#fff;transform:scaleX(0.865);transform-origin:0 0;">0.00</span>
<span class="a t" style="left:676.0px;top:419.0px;font-size:9.5px;line-height:12px;color:#fff;transform:scaleX(0.865);transform-origin:0 0;">0.00</span>
<span class="a t" style="left:745.0px;top:419.0px;font-size:9.5px;line-height:12px;color:#fff;transform:scaleX(0.865);transform-origin:0 0;">1.00</span>
<div class="a" style="left:12px;top:433px;width:756px;height:14px;background:#d4d4d4"></div>
<svg style="left:15px;top:435px" width="8" height="10" viewBox="0 0 8 10"><rect x=".5" y=".5" width="7" height="9" fill="#fff" stroke="#555" stroke-width=".8"/><path d="M4 2L6.500 5H5v3H3V5H1.500z" fill="#1f9a1f"/></svg>
<span class="a t" style="left:30.5px;top:434.0px;font-size:9.5px;line-height:12px;color:#111;transform:scaleX(0.855);transform-origin:0 0;font-weight:bold;">Balance: 5 000.00  Equity: 5 001.00  Margin: 26.78  Free margin: 4 974.22  Margin level: 18672.99%</span>
<span class="a t" style="left:744.0px;top:434.0px;font-size:9.5px;line-height:12px;color:#111;transform:scaleX(0.919);transform-origin:0 0;font-weight:bold;">1.00</span>
<div class="a" style="left:12px;top:512px;width:756px;height:1px;background:#555"></div>
<div class="a" style="left:12px;top:513px;width:756px;height:16px;background:#f0f0f0"></div>
<div class="a" style="left:14px;top:512px;width:37px;height:14px;background:#fff;border:1px solid #555;border-top:none"></div>
<span class="a t" style="left:20.0px;top:513.5px;font-size:9.5px;line-height:12px;color:#000;transform:scaleX(0.879);transform-origin:0 0;">Trade</span>
<span class="a t" style="left:56.5px;top:513.5px;font-size:9.5px;line-height:12px;color:#808080;transform:scaleX(0.849);transform-origin:0 0;">Account History</span>
<span class="a t" style="left:128.0px;top:513.5px;font-size:9.5px;line-height:12px;color:#808080;transform:scaleX(0.842);transform-origin:0 0;">News</span>
<span class="a t" style="left:163.0px;top:513.5px;font-size:9.5px;line-height:12px;color:#808080;transform:scaleX(0.864);transform-origin:0 0;">Alerts</span>
<span class="a t" style="left:199.0px;top:513.5px;font-size:9.5px;line-height:12px;color:#808080;transform:scaleX(0.824);transform-origin:0 0;">Mailbox</span>
<span class="a t" style="left:241.0px;top:513.5px;font-size:9.5px;line-height:12px;color:#808080;transform:scaleX(0.869);transform-origin:0 0;">Experts</span>
<span class="a t" style="left:284.5px;top:513.5px;font-size:9.5px;line-height:12px;color:#808080;transform:scaleX(0.818);transform-origin:0 0;">Journal</span>
<div class="a" style="left:121px;top:514px;width:1px;height:11px;background:#8a8a8a"></div>
<div class="a" style="left:155.5px;top:514px;width:1px;height:11px;background:#8a8a8a"></div>
<div class="a" style="left:191px;top:514px;width:1px;height:11px;background:#8a8a8a"></div>
<div class="a" style="left:233.5px;top:514px;width:1px;height:11px;background:#8a8a8a"></div>
<div class="a" style="left:277px;top:514px;width:1px;height:11px;background:#8a8a8a"></div>
<div class="a" style="left:317.5px;top:514px;width:1px;height:11px;background:#8a8a8a"></div>
<div class="a" style="left:0px;top:529px;width:768px;height:13px;background:#f0f0f0;border-top:1px solid #dadada"></div>
<span class="a t" style="left:3.0px;top:534.3px;font-size:9.5px;line-height:12px;color:#000;transform:scaleX(0.852);transform-origin:0 0;">For Help, press F1</span>
<span class="a t" style="left:228.0px;top:534.3px;font-size:9.5px;line-height:12px;color:#000;transform:scaleX(0.872);transform-origin:0 0;">IFX One Click Trading</span>
<div class="a" style="left:223px;top:532px;width:1px;height:10px;background:#c2c2c2"></div>
<div class="a" style="left:312px;top:532px;width:1px;height:10px;background:#c2c2c2"></div>
<div class="a" style="left:440.5px;top:532px;width:1px;height:10px;background:#c2c2c2"></div>
<div class="a" style="left:494px;top:532px;width:1px;height:10px;background:#c2c2c2"></div>
<div class="a" style="left:545.5px;top:532px;width:1px;height:10px;background:#c2c2c2"></div>
<div class="a" style="left:597.5px;top:532px;width:1px;height:10px;background:#c2c2c2"></div>
<div class="a" style="left:647px;top:532px;width:1px;height:10px;background:#c2c2c2"></div>
<div class="a" style="left:652px;top:535px;width:1px;height:7px;background:#4aa83a"></div>
<div class="a" style="left:654px;top:535px;width:1px;height:7px;background:#4aa83a"></div>
<div class="a" style="left:656px;top:535px;width:1px;height:7px;background:#4aa83a"></div>
<div class="a" style="left:656px;top:541.1px;width:1px;height:0.9px;background:#c0392b"></div>
<div class="a" style="left:658px;top:535px;width:1px;height:7px;background:#4aa83a"></div>
<div class="a" style="left:658px;top:540.2px;width:1px;height:1.8px;background:#c0392b"></div>
<div class="a" style="left:660px;top:535px;width:1px;height:7px;background:#4aa83a"></div>
<div class="a" style="left:660px;top:539.3px;width:1px;height:2.7px;background:#c0392b"></div>
<div class="a" style="left:662px;top:535px;width:1px;height:7px;background:#4aa83a"></div>
<div class="a" style="left:662px;top:538.4px;width:1px;height:3.6px;background:#c0392b"></div>
<div class="a" style="left:664px;top:535px;width:1px;height:7px;background:#4aa83a"></div>
<div class="a" style="left:664px;top:537.5px;width:1px;height:4.5px;background:#c0392b"></div>
<div class="a" style="left:666px;top:535px;width:1px;height:7px;background:#4aa83a"></div>
<div class="a" style="left:666px;top:536.6px;width:1px;height:5.4px;background:#c0392b"></div>
<div class="a" style="left:668px;top:535px;width:1px;height:7px;background:#4aa83a"></div>
<div class="a" style="left:668px;top:535.7px;width:1px;height:6.3px;background:#c0392b"></div>
<span class="a t" style="left:694.5px;top:534.5px;font-size:9.5px;line-height:12px;color:#000;transform:scaleX(0.875);transform-origin:0 0;">2532/4 kb</span>
<svg style="left:704px;top:496px" width="40" height="36" viewBox="0 0 40 36"><g fill="none" stroke="#d6d6d6" stroke-linecap="round"><circle cx="20" cy="18.500" r="8.500" stroke-width="2.600"/><circle cx="20" cy="18.500" r="3.600" stroke-width="2"/><path d="M5 24c-2-9 5-19 17-19" stroke-width="2.400"/><path d="M30 9.500c3-2 6-2 8 .5" stroke-width="2.400"/></g></svg>
<span class="a t" style="left:686.5px;top:524.5px;font-size:12px;line-height:16px;color:#fbfbfb;transform:scaleX(0.977);transform-origin:0 0;font-weight:bold;font-style:italic;-webkit-text-stroke:.7px #cdcdcd;text-shadow:0 0 1px #d8d8d8;">jetScreenshot</span>
<svg style="left:759px;top:534px" width="9" height="8" viewBox="0 0 9 8"><path d="M1 8L9 0M4 8L9 3M7 8L9 6" stroke="#b8b8b8" stroke-width="1"/></svg>
<div class="a" style="left:89px;top:114px;width:576px;height:290px;border-radius:6px;background:#bdd3ea;box-shadow:0 0 0 1px rgba(50,58,68,.75),1px 3px 9px 2px rgba(0,0,0,.5);overflow:hidden"><div class="a" style="left:0;top:0;width:576px;height:290px;background:linear-gradient(#e3ecf6 0,#cbdbec 22px,#b9d1ea 100%)"></div><div class="a" style="left:139px;top:0;width:440px;height:266px;background:linear-gradient(90deg,rgba(30,34,38,0) 0,#23272b 6px)"></div><div class="a" style="left:139px;top:0;width:440px;height:24px;background:linear-gradient(rgba(110,116,123,.75) 0,rgba(60,65,71,.5) 3px,rgba(30,33,37,.3) 12px,rgba(50,54,59,.35) 24px),linear-gradient(90deg,rgba(20,23,26,0) 0,#262a2f 6px)"></div><div class="a" style="left:130px;top:6px;width:150px;height:13px;background:rgba(210,216,224,.72);filter:blur(3.500px);border-radius:6px"></div><div class="a" style="left:565px;top:24px;width:11px;height:242px;background:linear-gradient(90deg,#a4adb6 0,#525c67 1.500px,#38414b 100%)"></div><div class="a" style="left:0;top:284px;width:576px;height:6px;background:linear-gradient(#eef3f9,#bfd4ea)"></div><div class="a" style="left:0;top:22px;width:6px;height:264px;background:linear-gradient(90deg,#bed3e8,#e4edf6 50%,#d6e3f0)"></div><div class="a" style="left:0;top:0;width:576px;height:290px;border:1px solid rgba(255,255,255,.45);border-radius:6px"></div></div>
<span class="a t" style="left:95.0px;top:117.6px;font-size:10.5px;line-height:14px;color:#000;transform:scaleX(0.830);transform-origin:0 0;">Order #83665158 buy 1.00 EURUSD at 1.3391 sl: 1.3338 tp: 1.3439</span>
<div class="a" style="left:583px;top:114px;width:77px;height:14px;border:1px solid #9aa1a8;border-top:none;border-radius:0 0 4px 4px;overflow:hidden;background:linear-gradient(#7d848b 0,#4a5056 45%,#2e3338 50%,#3d4349 100%)"><div class="a" style="left:41px;top:0;width:36px;height:14px;background:linear-gradient(#e8a090 0,#d45a44 45%,#c2331c 50%,#d6553c 100%)"></div><div class="a" style="left:20.500px;top:0;width:1px;height:14px;background:#a9afb5"></div><div class="a" style="left:40.500px;top:0;width:1px;height:14px;background:#a9afb5"></div></div>
<div class="a" style="left:590px;top:120.5px;width:8px;height:3px;background:#fff;border-radius:.5px;box-shadow:0 0 1px #222"></div>
<div class="a" style="left:610px;top:117.5px;width:8px;height:6.5px;border:1.500px solid #d5d8db;opacity:.8"></div>
<span class="a t" style="left:636.5px;top:111.0px;font-size:13px;line-height:17px;color:#fff;transform:scaleX(1.382);transform-origin:0 0;font-weight:bold;text-shadow:0 0 1px #5a1208,0 0 1px #5a1208;">x</span>
<div class="a" style="left:94.5px;top:134.8px;width:565.5px;height:263.7px;background:#f0f0f0;border:1px solid #717c88"></div>
<div class="a" style="left:95.5px;top:135.8px;width:563.5px;height:2px;background:#f6f6f6"></div>
<div class="a" style="left:100px;top:146.5px;width:224.5px;height:245px;background:#fff;border:1px solid #8c8c8c;border-right-color:#fdfdfd;border-bottom-color:#fdfdfd"></div>
<svg style="left:0;top:0" width="768" height="542" viewBox="0 0 768 542" shape-rendering="crispEdges"><path d="M129.5 150V388" stroke="#cfcfcf" stroke-width="1" stroke-dasharray="2 2"/><path d="M153.5 150V388" stroke="#cfcfcf" stroke-width="1" stroke-dasharray="2 2"/><path d="M176.5 150V388" stroke="#cfcfcf" stroke-width="1" stroke-dasharray="2 2"/><path d="M200.5 150V388" stroke="#cfcfcf" stroke-width="1" stroke-dasharray="2 2"/><path d="M224.5 150V388" stroke="#cfcfcf" stroke-width="1" stroke-dasharray="2 2"/><path d="M248.5 150V388" stroke="#cfcfcf" stroke-width="1" stroke-dasharray="2 2"/><path d="M272.5 150V388" stroke="#cfcfcf" stroke-width="1" stroke-dasharray="2 2"/><path d="M103 172.5H293" stroke="#cfcfcf" stroke-width="1" stroke-dasharray="2 2"/><path d="M103 196.5H293" stroke="#cfcfcf" stroke-width="1" stroke-dasharray="2 2"/><path d="M103 220.5H293" stroke="#cfcfcf" stroke-width="1" stroke-dasharray="2 2"/><path d="M103 244.5H293" stroke="#cfcfcf" stroke-width="1" stroke-dasharray="2 2"/><path d="M103 268.5H293" stroke="#cfcfcf" stroke-width="1" stroke-dasharray="2 2"/><path d="M103 292.5H293" stroke="#cfcfcf" stroke-width="1" stroke-dasharray="2 2"/><path d="M103 316.5H293" stroke="#cfcfcf" stroke-width="1" stroke-dasharray="2 2"/><path d="M103 340.5H293" stroke="#cfcfcf" stroke-width="1" stroke-dasharray="2 2"/><path d="M103 364.5H293" stroke="#cfcfcf" stroke-width="1" stroke-dasharray="2 2"/></svg>
<svg style="left:0;top:0" width="768" height="542" viewBox="0 0 768 542"><rect x="104.1" y="256.4" width="2.4" height="13.0" fill="#f8d0d0"/><path d="M106.3 260.9V278.2" stroke="#eda3a3" stroke-width="1.400"/><rect x="106.3" y="269.7" width="4.3" height="13.0" fill="#f8d0d0"/><path d="M110.4 274.2V291.2" stroke="#eda3a3" stroke-width="1.400"/><rect x="110.4" y="282.7" width="6.6" height="13.0" fill="#f8d0d0"/><path d="M116.8 277.5V291.2" stroke="#eda3a3" stroke-width="1.400"/><rect x="116.8" y="273.0" width="2.4" height="13.0" fill="#f8d0d0"/><path d="M119.0 277.5V291.2" stroke="#eda3a3" stroke-width="1.400"/><rect x="119.0" y="282.7" width="2.4" height="13.0" fill="#f8d0d0"/><path d="M121.2 274.2V291.2" stroke="#eda3a3" stroke-width="1.400"/><rect x="121.2" y="269.7" width="6.0" height="13.0" fill="#f8d0d0"/><path d="M127.0 260.9V278.2" stroke="#eda3a3" stroke-width="1.400"/><rect x="127.0" y="256.4" width="2.1" height="13.0" fill="#f8d0d0"/><path d="M129.0 247.0V264.9" stroke="#eda3a3" stroke-width="1.400"/><rect x="129.0" y="242.5" width="3.8" height="13.0" fill="#f8d0d0"/><path d="M132.6 234.6V251.0" stroke="#eda3a3" stroke-width="1.400"/><rect x="132.6" y="230.1" width="1.9" height="13.0" fill="#f8d0d0"/><path d="M134.2 234.6V251.0" stroke="#eda3a3" stroke-width="1.400"/><rect x="134.2" y="242.5" width="5.5" height="13.0" fill="#f8d0d0"/><path d="M139.5 247.0V264.9" stroke="#eda3a3" stroke-width="1.400"/><rect x="139.5" y="256.4" width="3.0" height="13.0" fill="#f8d0d0"/><path d="M142.3 260.9V278.2" stroke="#eda3a3" stroke-width="1.400"/><rect x="142.3" y="269.7" width="5.2" height="13.0" fill="#f8d0d0"/><path d="M147.2 274.2V287.0" stroke="#eda3a3" stroke-width="1.400"/><rect x="147.2" y="278.5" width="4.1" height="13.0" fill="#f8d0d0"/><path d="M151.1 260.9V287.0" stroke="#eda3a3" stroke-width="1.400"/><rect x="151.1" y="256.4" width="4.6" height="13.0" fill="#f8d0d0"/><path d="M155.5 260.9V305.0" stroke="#eda3a3" stroke-width="1.400"/><rect x="155.5" y="296.5" width="1.9" height="13.0" fill="#f8d0d0"/><path d="M157.2 301.0V331.3" stroke="#eda3a3" stroke-width="1.400"/><rect x="157.2" y="322.8" width="3.0" height="13.0" fill="#f8d0d0"/><path d="M160.0 313.4V331.3" stroke="#eda3a3" stroke-width="1.400"/><rect x="160.0" y="308.9" width="2.4" height="13.0" fill="#f8d0d0"/><path d="M162.2 301.0V317.4" stroke="#eda3a3" stroke-width="1.400"/><rect x="162.2" y="296.5" width="3.0" height="13.0" fill="#f8d0d0"/><path d="M164.9 287.2V305.0" stroke="#eda3a3" stroke-width="1.400"/><rect x="164.9" y="282.7" width="4.1" height="13.0" fill="#f8d0d0"/><path d="M168.8 287.2V302.2" stroke="#eda3a3" stroke-width="1.400"/><rect x="168.8" y="293.7" width="1.9" height="13.0" fill="#f8d0d0"/><path d="M170.5 277.5V302.2" stroke="#eda3a3" stroke-width="1.400"/><rect x="170.5" y="273.0" width="2.4" height="13.0" fill="#f8d0d0"/><path d="M172.7 277.5V287.0" stroke="#eda3a3" stroke-width="1.400"/><rect x="172.7" y="278.5" width="4.3" height="13.0" fill="#f8d0d0"/><path d="M176.8 276.1V287.0" stroke="#eda3a3" stroke-width="1.400"/><rect x="176.8" y="271.6" width="3.2" height="13.0" fill="#f8d0d0"/><path d="M179.9 276.1V293.9" stroke="#eda3a3" stroke-width="1.400"/><rect x="179.9" y="285.4" width="1.9" height="13.0" fill="#f8d0d0"/><path d="M181.5 289.9V318.8" stroke="#eda3a3" stroke-width="1.400"/><rect x="181.5" y="310.3" width="1.9" height="13.0" fill="#f8d0d0"/><path d="M183.2 314.8V343.7" stroke="#eda3a3" stroke-width="1.400"/><rect x="183.2" y="335.2" width="1.9" height="13.0" fill="#f8d0d0"/><path d="M184.9 327.3V343.7" stroke="#eda3a3" stroke-width="1.400"/><rect x="184.9" y="322.8" width="2.4" height="13.0" fill="#f8d0d0"/><path d="M187.1 313.4V331.3" stroke="#eda3a3" stroke-width="1.400"/><rect x="187.1" y="308.9" width="10.7" height="13.0" fill="#f8d0d0"/><path d="M197.6 313.4V331.3" stroke="#eda3a3" stroke-width="1.400"/><rect x="197.6" y="322.8" width="1.9" height="13.0" fill="#f8d0d0"/><path d="M199.2 327.3V344.5" stroke="#eda3a3" stroke-width="1.400"/><rect x="199.2" y="336.0" width="1.9" height="13.0" fill="#f8d0d0"/><path d="M200.9 309.3V344.5" stroke="#eda3a3" stroke-width="1.400"/><rect x="200.9" y="304.8" width="3.0" height="13.0" fill="#f8d0d0"/><path d="M203.7 277.5V313.3" stroke="#eda3a3" stroke-width="1.400"/><rect x="203.7" y="273.0" width="3.0" height="13.0" fill="#f8d0d0"/><path d="M206.4 277.5V305.0" stroke="#eda3a3" stroke-width="1.400"/><rect x="206.4" y="296.5" width="3.0" height="13.0" fill="#f8d0d0"/><path d="M209.2 301.0V311.9" stroke="#eda3a3" stroke-width="1.400"/><rect x="209.2" y="303.4" width="6.6" height="13.0" fill="#f8d0d0"/><path d="M215.6 298.2V311.9" stroke="#eda3a3" stroke-width="1.400"/><rect x="215.6" y="293.7" width="3.0" height="13.0" fill="#f8d0d0"/><path d="M218.3 277.5V302.2" stroke="#eda3a3" stroke-width="1.400"/><rect x="218.3" y="273.0" width="3.0" height="13.0" fill="#f8d0d0"/><path d="M221.1 277.5V302.2" stroke="#eda3a3" stroke-width="1.400"/><rect x="221.1" y="293.7" width="3.0" height="13.0" fill="#f8d0d0"/><path d="M223.9 298.2V304.2" stroke="#eda3a3" stroke-width="1.400"/><rect x="223.9" y="295.7" width="7.1" height="13.0" fill="#f8d0d0"/><path d="M230.8 300.2V317.4" stroke="#eda3a3" stroke-width="1.400"/><rect x="230.8" y="308.9" width="5.7" height="13.0" fill="#f8d0d0"/><path d="M236.3 313.4V325.7" stroke="#eda3a3" stroke-width="1.400"/><rect x="236.3" y="317.2" width="8.5" height="13.0" fill="#f8d0d0"/><path d="M244.6 313.4V325.7" stroke="#eda3a3" stroke-width="1.400"/><rect x="244.6" y="308.9" width="4.3" height="13.0" fill="#f8d0d0"/><path d="M248.8 300.2V317.4" stroke="#eda3a3" stroke-width="1.400"/><rect x="248.8" y="295.7" width="4.3" height="13.0" fill="#f8d0d0"/><path d="M252.9 300.2V310.5" stroke="#eda3a3" stroke-width="1.400"/><rect x="252.9" y="302.0" width="3.0" height="13.0" fill="#f8d0d0"/><path d="M255.7 290.5V310.5" stroke="#eda3a3" stroke-width="1.400"/><rect x="255.7" y="286.0" width="5.7" height="13.0" fill="#f8d0d0"/><path d="M261.2 290.5V305.0" stroke="#eda3a3" stroke-width="1.400"/><rect x="261.2" y="296.5" width="1.9" height="13.0" fill="#f8d0d0"/><path d="M262.9 274.2V305.0" stroke="#eda3a3" stroke-width="1.400"/><rect x="262.9" y="269.7" width="1.6" height="13.0" fill="#f8d0d0"/><path d="M264.3 274.2V305.0" stroke="#eda3a3" stroke-width="1.400"/><rect x="264.3" y="296.5" width="3.0" height="13.0" fill="#f8d0d0"/><path d="M267.0 274.2V305.0" stroke="#eda3a3" stroke-width="1.400"/><rect x="267.0" y="269.7" width="1.9" height="13.0" fill="#f8d0d0"/><path d="M268.7 274.2V302.2" stroke="#eda3a3" stroke-width="1.400"/><rect x="268.7" y="293.7" width="2.7" height="13.0" fill="#f8d0d0"/><path d="M271.2 274.2V302.2" stroke="#eda3a3" stroke-width="1.400"/><rect x="271.2" y="269.7" width="1.6" height="13.0" fill="#f8d0d0"/><path d="M106.5 256.4V269.4M108.5 269.7V282.7M110.5 269.7V282.7M112.5 282.7V295.7M114.5 282.7V295.7M116.5 282.7V295.7M118.5 273.0V286.0M120.5 282.7V295.7M122.5 269.7V282.7M124.5 269.7V282.7M126.5 269.7V282.7M128.6 256.4V269.4M130.6 242.5V255.5M132.6 242.5V255.5M134.6 230.1V243.1M136.6 242.5V255.5M138.6 242.5V255.5M140.6 256.4V269.4M142.6 256.4V269.4M144.6 269.7V282.7M146.6 269.7V282.7M148.6 278.5V291.5M150.6 278.5V291.5M152.6 256.4V269.4M154.6 256.4V269.4M156.6 296.5V309.5M158.6 322.8V335.8M160.6 308.9V321.9M162.6 308.9V321.9M164.6 296.5V309.5M166.6 282.7V295.7M168.6 282.7V295.7M170.6 293.7V306.7M172.6 273.0V286.0M174.6 278.5V291.5M176.6 278.5V291.5M178.6 271.6V284.6M180.6 285.4V298.4M182.6 310.3V323.3M184.6 335.2V348.2M186.6 322.8V335.8M188.6 308.9V321.9M190.6 308.9V321.9M192.6 308.9V321.9M194.6 308.9V321.9M196.6 308.9V321.9M198.6 322.8V335.8M200.6 336.0V349.0M202.6 304.8V317.8M204.6 273.0V286.0M206.6 273.0V286.0M208.6 296.5V309.5M210.6 303.4V316.4M212.6 303.4V316.4M214.6 303.4V316.4M216.6 293.7V306.7M218.6 293.7V306.7M220.6 273.0V286.0M222.6 293.7V306.7M224.6 295.7V308.7M226.6 295.7V308.7M228.6 295.7V308.7M230.6 295.7V308.7M232.6 308.9V321.9M234.6 308.9V321.9M236.6 308.9V321.9M238.6 317.2V330.2M240.6 317.2V330.2M242.6 317.2V330.2M244.6 317.2V330.2M246.6 308.9V321.9M248.6 308.9V321.9M250.6 295.7V308.7M252.6 295.7V308.7M254.6 302.0V315.0M256.6 286.0V299.0M258.6 286.0V299.0M260.6 286.0V299.0M262.6 296.5V309.5M264.6 269.7V282.7M266.6 296.5V309.5M268.6 269.7V282.7M270.6 293.7V306.7M272.6 269.7V282.7" stroke="#eda3a3" stroke-width="1.100" fill="none"/><path d="M104.1 262.9V262.9H106.3V276.2H110.4V289.2H116.8V279.5H119.0V289.2H121.2V276.2H127.0V262.9H129.0V249.0H132.6V236.6H134.2V249.0H139.5V262.9H142.3V276.2H147.2V285.0H151.1V262.9H155.5V303.0H157.2V329.3H160.0V315.4H162.2V303.0H164.9V289.2H168.8V300.2H170.5V279.5H172.7V285.0H176.8V278.1H179.9V291.9H181.5V316.8H183.2V341.7H184.9V329.3H187.1V315.4H197.6V329.3H199.2V342.5H200.9V311.3H203.7V279.5H206.4V303.0H209.2V309.9H215.6V300.2H218.3V279.5H221.1V300.2H223.9V302.2H230.8V315.4H236.3V323.7H244.6V315.4H248.8V302.2H252.9V308.5H255.7V292.5H261.2V303.0H262.9V276.2H264.3V303.0H267.0V276.2H268.7V300.2H271.2V276.2H272.6V269.8H294" fill="none" stroke="#e58888" stroke-width=".9"/></svg>
<svg style="left:0;top:0" width="768" height="542" viewBox="0 0 768 542"><rect x="104.1" y="216.4" width="2.4" height="13.0" fill="#b4cfee"/><path d="M106.3 220.9V238.2" stroke="#79a7de" stroke-width="1.400"/><rect x="106.3" y="229.7" width="4.3" height="13.0" fill="#b4cfee"/><path d="M110.4 234.2V251.2" stroke="#79a7de" stroke-width="1.400"/><rect x="110.4" y="242.7" width="6.6" height="13.0" fill="#b4cfee"/><path d="M116.8 237.5V251.2" stroke="#79a7de" stroke-width="1.400"/><rect x="116.8" y="233.0" width="2.4" height="13.0" fill="#b4cfee"/><path d="M119.0 237.5V251.2" stroke="#79a7de" stroke-width="1.400"/><rect x="119.0" y="242.7" width="2.4" height="13.0" fill="#b4cfee"/><path d="M121.2 234.2V251.2" stroke="#79a7de" stroke-width="1.400"/><rect x="121.2" y="229.7" width="6.0" height="13.0" fill="#b4cfee"/><path d="M127.0 220.9V238.2" stroke="#79a7de" stroke-width="1.400"/><rect x="127.0" y="216.4" width="2.1" height="13.0" fill="#b4cfee"/><path d="M129.0 207.0V224.9" stroke="#79a7de" stroke-width="1.400"/><rect x="129.0" y="202.5" width="3.8" height="13.0" fill="#b4cfee"/><path d="M132.6 194.6V211.0" stroke="#79a7de" stroke-width="1.400"/><rect x="132.6" y="190.1" width="1.9" height="13.0" fill="#b4cfee"/><path d="M134.2 194.6V211.0" stroke="#79a7de" stroke-width="1.400"/><rect x="134.2" y="202.5" width="5.5" height="13.0" fill="#b4cfee"/><path d="M139.5 207.0V224.9" stroke="#79a7de" stroke-width="1.400"/><rect x="139.5" y="216.4" width="3.0" height="13.0" fill="#b4cfee"/><path d="M142.3 220.9V238.2" stroke="#79a7de" stroke-width="1.400"/><rect x="142.3" y="229.7" width="5.2" height="13.0" fill="#b4cfee"/><path d="M147.2 234.2V247.0" stroke="#79a7de" stroke-width="1.400"/><rect x="147.2" y="238.5" width="4.1" height="13.0" fill="#b4cfee"/><path d="M151.1 220.9V247.0" stroke="#79a7de" stroke-width="1.400"/><rect x="151.1" y="216.4" width="4.6" height="13.0" fill="#b4cfee"/><path d="M155.5 220.9V265.0" stroke="#79a7de" stroke-width="1.400"/><rect x="155.5" y="256.5" width="1.9" height="13.0" fill="#b4cfee"/><path d="M157.2 261.0V291.3" stroke="#79a7de" stroke-width="1.400"/><rect x="157.2" y="282.8" width="3.0" height="13.0" fill="#b4cfee"/><path d="M160.0 273.4V291.3" stroke="#79a7de" stroke-width="1.400"/><rect x="160.0" y="268.9" width="2.4" height="13.0" fill="#b4cfee"/><path d="M162.2 261.0V277.4" stroke="#79a7de" stroke-width="1.400"/><rect x="162.2" y="256.5" width="3.0" height="13.0" fill="#b4cfee"/><path d="M164.9 247.2V265.0" stroke="#79a7de" stroke-width="1.400"/><rect x="164.9" y="242.7" width="4.1" height="13.0" fill="#b4cfee"/><path d="M168.8 247.2V262.2" stroke="#79a7de" stroke-width="1.400"/><rect x="168.8" y="253.7" width="1.9" height="13.0" fill="#b4cfee"/><path d="M170.5 237.5V262.2" stroke="#79a7de" stroke-width="1.400"/><rect x="170.5" y="233.0" width="2.4" height="13.0" fill="#b4cfee"/><path d="M172.7 237.5V247.0" stroke="#79a7de" stroke-width="1.400"/><rect x="172.7" y="238.5" width="4.3" height="13.0" fill="#b4cfee"/><path d="M176.8 236.1V247.0" stroke="#79a7de" stroke-width="1.400"/><rect x="176.8" y="231.6" width="3.2" height="13.0" fill="#b4cfee"/><path d="M179.9 236.1V253.9" stroke="#79a7de" stroke-width="1.400"/><rect x="179.9" y="245.4" width="1.9" height="13.0" fill="#b4cfee"/><path d="M181.5 249.9V278.8" stroke="#79a7de" stroke-width="1.400"/><rect x="181.5" y="270.3" width="1.9" height="13.0" fill="#b4cfee"/><path d="M183.2 274.8V303.7" stroke="#79a7de" stroke-width="1.400"/><rect x="183.2" y="295.2" width="1.9" height="13.0" fill="#b4cfee"/><path d="M184.9 287.3V303.7" stroke="#79a7de" stroke-width="1.400"/><rect x="184.9" y="282.8" width="2.4" height="13.0" fill="#b4cfee"/><path d="M187.1 273.4V291.3" stroke="#79a7de" stroke-width="1.400"/><rect x="187.1" y="268.9" width="10.7" height="13.0" fill="#b4cfee"/><path d="M197.6 273.4V291.3" stroke="#79a7de" stroke-width="1.400"/><rect x="197.6" y="282.8" width="1.9" height="13.0" fill="#b4cfee"/><path d="M199.2 287.3V304.5" stroke="#79a7de" stroke-width="1.400"/><rect x="199.2" y="296.0" width="1.9" height="13.0" fill="#b4cfee"/><path d="M200.9 269.3V304.5" stroke="#79a7de" stroke-width="1.400"/><rect x="200.9" y="264.8" width="3.0" height="13.0" fill="#b4cfee"/><path d="M203.7 237.5V273.3" stroke="#79a7de" stroke-width="1.400"/><rect x="203.7" y="233.0" width="3.0" height="13.0" fill="#b4cfee"/><path d="M206.4 237.5V265.0" stroke="#79a7de" stroke-width="1.400"/><rect x="206.4" y="256.5" width="3.0" height="13.0" fill="#b4cfee"/><path d="M209.2 261.0V271.9" stroke="#79a7de" stroke-width="1.400"/><rect x="209.2" y="263.4" width="6.6" height="13.0" fill="#b4cfee"/><path d="M215.6 258.2V271.9" stroke="#79a7de" stroke-width="1.400"/><rect x="215.6" y="253.7" width="3.0" height="13.0" fill="#b4cfee"/><path d="M218.3 237.5V262.2" stroke="#79a7de" stroke-width="1.400"/><rect x="218.3" y="233.0" width="3.0" height="13.0" fill="#b4cfee"/><path d="M221.1 237.5V262.2" stroke="#79a7de" stroke-width="1.400"/><rect x="221.1" y="253.7" width="3.0" height="13.0" fill="#b4cfee"/><path d="M223.9 258.2V264.2" stroke="#79a7de" stroke-width="1.400"/><rect x="223.9" y="255.7" width="7.1" height="13.0" fill="#b4cfee"/><path d="M230.8 260.2V277.4" stroke="#79a7de" stroke-width="1.400"/><rect x="230.8" y="268.9" width="5.7" height="13.0" fill="#b4cfee"/><path d="M236.3 273.4V285.7" stroke="#79a7de" stroke-width="1.400"/><rect x="236.3" y="277.2" width="8.5" height="13.0" fill="#b4cfee"/><path d="M244.6 273.4V285.7" stroke="#79a7de" stroke-width="1.400"/><rect x="244.6" y="268.9" width="4.3" height="13.0" fill="#b4cfee"/><path d="M248.8 260.2V277.4" stroke="#79a7de" stroke-width="1.400"/><rect x="248.8" y="255.7" width="4.3" height="13.0" fill="#b4cfee"/><path d="M252.9 260.2V270.5" stroke="#79a7de" stroke-width="1.400"/><rect x="252.9" y="262.0" width="3.0" height="13.0" fill="#b4cfee"/><path d="M255.7 250.5V270.5" stroke="#79a7de" stroke-width="1.400"/><rect x="255.7" y="246.0" width="5.7" height="13.0" fill="#b4cfee"/><path d="M261.2 250.5V265.0" stroke="#79a7de" stroke-width="1.400"/><rect x="261.2" y="256.5" width="1.9" height="13.0" fill="#b4cfee"/><path d="M262.9 234.2V265.0" stroke="#79a7de" stroke-width="1.400"/><rect x="262.9" y="229.7" width="1.6" height="13.0" fill="#b4cfee"/><path d="M264.3 234.2V265.0" stroke="#79a7de" stroke-width="1.400"/><rect x="264.3" y="256.5" width="3.0" height="13.0" fill="#b4cfee"/><path d="M267.0 234.2V265.0" stroke="#79a7de" stroke-width="1.400"/><rect x="267.0" y="229.7" width="1.9" height="13.0" fill="#b4cfee"/><path d="M268.7 234.2V262.2" stroke="#79a7de" stroke-width="1.400"/><rect x="268.7" y="253.7" width="2.7" height="13.0" fill="#b4cfee"/><path d="M271.2 234.2V262.2" stroke="#79a7de" stroke-width="1.400"/><rect x="271.2" y="229.7" width="1.6" height="13.0" fill="#b4cfee"/><path d="M106.5 216.4V229.4M108.5 229.7V242.7M110.5 229.7V242.7M112.5 242.7V255.7M114.5 242.7V255.7M116.5 242.7V255.7M118.5 233.0V246.0M120.5 242.7V255.7M122.5 229.7V242.7M124.5 229.7V242.7M126.5 229.7V242.7M128.6 216.4V229.4M130.6 202.5V215.5M132.6 202.5V215.5M134.6 190.1V203.1M136.6 202.5V215.5M138.6 202.5V215.5M140.6 216.4V229.4M142.6 216.4V229.4M144.6 229.7V242.7M146.6 229.7V242.7M148.6 238.5V251.5M150.6 238.5V251.5M152.6 216.4V229.4M154.6 216.4V229.4M156.6 256.5V269.5M158.6 282.8V295.8M160.6 268.9V281.9M162.6 268.9V281.9M164.6 256.5V269.5M166.6 242.7V255.7M168.6 242.7V255.7M170.6 253.7V266.7M172.6 233.0V246.0M174.6 238.5V251.5M176.6 238.5V251.5M178.6 231.6V244.6M180.6 245.4V258.4M182.6 270.3V283.3M184.6 295.2V308.2M186.6 282.8V295.8M188.6 268.9V281.9M190.6 268.9V281.9M192.6 268.9V281.9M194.6 268.9V281.9M196.6 268.9V281.9M198.6 282.8V295.8M200.6 296.0V309.0M202.6 264.8V277.8M204.6 233.0V246.0M206.6 233.0V246.0M208.6 256.5V269.5M210.6 263.4V276.4M212.6 263.4V276.4M214.6 263.4V276.4M216.6 253.7V266.7M218.6 253.7V266.7M220.6 233.0V246.0M222.6 253.7V266.7M224.6 255.7V268.7M226.6 255.7V268.7M228.6 255.7V268.7M230.6 255.7V268.7M232.6 268.9V281.9M234.6 268.9V281.9M236.6 268.9V281.9M238.6 277.2V290.2M240.6 277.2V290.2M242.6 277.2V290.2M244.6 277.2V290.2M246.6 268.9V281.9M248.6 268.9V281.9M250.6 255.7V268.7M252.6 255.7V268.7M254.6 262.0V275.0M256.6 246.0V259.0M258.6 246.0V259.0M260.6 246.0V259.0M262.6 256.5V269.5M264.6 229.7V242.7M266.6 256.5V269.5M268.6 229.7V242.7M270.6 253.7V266.7M272.6 229.7V242.7" stroke="#79a7de" stroke-width="1.100" fill="none"/><path d="M104.1 222.9V222.9H106.3V236.2H110.4V249.2H116.8V239.5H119.0V249.2H121.2V236.2H127.0V222.9H129.0V209.0H132.6V196.6H134.2V209.0H139.5V222.9H142.3V236.2H147.2V245.0H151.1V222.9H155.5V263.0H157.2V289.3H160.0V275.4H162.2V263.0H164.9V249.2H168.8V260.2H170.5V239.5H172.7V245.0H176.8V238.1H179.9V251.9H181.5V276.8H183.2V301.7H184.9V289.3H187.1V275.4H197.6V289.3H199.2V302.5H200.9V271.3H203.7V239.5H206.4V263.0H209.2V269.9H215.6V260.2H218.3V239.5H221.1V260.2H223.9V262.2H230.8V275.4H236.3V283.7H244.6V275.4H248.8V262.2H252.9V268.5H255.7V252.5H261.2V263.0H262.9V236.2H264.3V263.0H267.0V236.2H268.7V260.2H271.2V236.2H272.6V230.0H294" fill="none" stroke="#3f80d2" stroke-width=".9"/></svg>
<div class="a" style="left:101.5px;top:148.5px;width:193px;height:240.5px;border:1.200px solid #222"></div>
<span class="a t" style="left:106.0px;top:149.0px;font-size:9px;line-height:12px;color:#222;transform:scaleX(0.750);transform-origin:0 0;">EURUSD</span>
<span class="a t" style="left:298.5px;top:166.5px;font-size:8.5px;line-height:11px;color:#2b3440;transform:scaleX(0.788);transform-origin:0 0;">1.3399</span>
<div class="a" style="left:294.5px;top:172px;width:2px;height:1px;background:#444"></div>
<span class="a t" style="left:298.5px;top:191.0px;font-size:8.5px;line-height:11px;color:#2b3440;transform:scaleX(0.788);transform-origin:0 0;">1.3397</span>
<div class="a" style="left:294.5px;top:196.5px;width:2px;height:1px;background:#444"></div>
<span class="a t" style="left:298.5px;top:215.0px;font-size:8.5px;line-height:11px;color:#2b3440;transform:scaleX(0.788);transform-origin:0 0;">1.3396</span>
<div class="a" style="left:294.5px;top:220.5px;width:2px;height:1px;background:#444"></div>
<span class="a t" style="left:298.5px;top:239.0px;font-size:8.5px;line-height:11px;color:#2b3440;transform:scaleX(0.788);transform-origin:0 0;">1.3394</span>
<div class="a" style="left:294.5px;top:244.5px;width:2px;height:1px;background:#444"></div>
<span class="a t" style="left:298.5px;top:287.0px;font-size:8.5px;line-height:11px;color:#2b3440;transform:scaleX(0.788);transform-origin:0 0;">1.3390</span>
<div class="a" style="left:294.5px;top:292.5px;width:2px;height:1px;background:#444"></div>
<span class="a t" style="left:298.5px;top:311.0px;font-size:8.5px;line-height:11px;color:#2b3440;transform:scaleX(0.788);transform-origin:0 0;">1.3388</span>
<div class="a" style="left:294.5px;top:316.5px;width:2px;height:1px;background:#444"></div>
<span class="a t" style="left:298.5px;top:335.0px;font-size:8.5px;line-height:11px;color:#2b3440;transform:scaleX(0.788);transform-origin:0 0;">1.3387</span>
<div class="a" style="left:294.5px;top:340.5px;width:2px;height:1px;background:#444"></div>
<span class="a t" style="left:298.5px;top:359.0px;font-size:8.5px;line-height:11px;color:#2b3440;transform:scaleX(0.788);transform-origin:0 0;">1.3385</span>
<div class="a" style="left:294.5px;top:364.5px;width:2px;height:1px;background:#444"></div>
<span class="a t" style="left:298.5px;top:380.5px;font-size:8.5px;line-height:11px;color:#2b3440;transform:scaleX(0.788);transform-origin:0 0;">1.3383</span>
<div class="a" style="left:294.5px;top:387.5px;width:2px;height:1px;background:#444"></div>
<div class="a" style="left:295px;top:225.5px;width:26.5px;height:9.3px;background:#1458e8"></div>
<span class="a t" style="left:298.5px;top:224.8px;font-size:8.5px;line-height:11px;color:#fff;transform:scaleX(0.788);transform-origin:0 0;">1.3395</span>
<div class="a" style="left:295px;top:265.3px;width:26.5px;height:9.3px;background:#f0686c"></div>
<span class="a t" style="left:298.5px;top:264.3px;font-size:8.5px;line-height:11px;color:#fff;transform:scaleX(0.788);transform-origin:0 0;">1.3392</span>
<span class="a t" style="left:369.5px;top:147.7px;font-size:9.5px;line-height:12px;color:#000;transform:scaleX(0.816);transform-origin:0 0;">Symbol:</span>
<div class="a" style="left:404.5px;top:146.5px;width:242.5px;height:15.5px;background:linear-gradient(#f4f4f4 0,#ebebeb 48%,#dddddd 52%,#d2d2d2 100%);border:1px solid #707070;border-radius:2.500px;box-shadow:inset 0 0 0 1px rgba(255,255,255,.7)"></div>
<span class="a t" style="left:407.0px;top:148.0px;font-size:9.5px;line-height:12px;color:#000;transform:scaleX(0.798);transform-origin:0 0;">EURUSD, Euro vs US Dollar</span>
<svg style="left:638.3px;top:153.2px" width="4.500" height="2.700" viewBox="0 0 5 3"><path d="M0 0h5L2.5 3z" fill="#111"/></svg>
<span class="a t" style="left:369.5px;top:167.2px;font-size:9.5px;line-height:12px;color:#000;transform:scaleX(0.816);transform-origin:0 0;">Volume:</span>
<div class="a" style="left:404.5px;top:166.5px;width:78.5px;height:14.5px;background:#fff;border:1px solid #e2e3ea;border-top-color:#abadb3"></div>
<span class="a t" style="left:409.5px;top:166.8px;font-size:9.5px;line-height:12px;color:#000;transform:scaleX(0.838);transform-origin:0 0;">1.00</span>
<svg style="left:474.3px;top:172.7px" width="4.500" height="2.700" viewBox="0 0 5 3"><path d="M0 0h5L2.5 3z" fill="#111"/></svg>
<span class="a t" style="left:360.5px;top:187.0px;font-size:9.5px;line-height:12px;color:#000;transform:scaleX(0.824);transform-origin:0 0;">Stop Loss:</span>
<div class="a" style="left:404.5px;top:185.5px;width:65px;height:14.5px;background:#fff;border:1px solid #e2e3ea;border-top-color:#abadb3"></div>
<span class="a t" style="left:441.0px;top:187.0px;font-size:9.5px;line-height:12px;color:#000;transform:scaleX(0.860);transform-origin:0 0;">0.0000</span>
<div class="a" style="left:470px;top:185.5px;width:12.5px;height:14.5px;background:linear-gradient(#f2f2f2,#d8d8d8);border:1px solid #aeb3b9;border-radius:1.500px"></div>
<div class="a" style="left:471px;top:192.5px;width:10.5px;height:1px;background:#b5b9be"></div>
<svg style="left:473.8px;top:187.8px" width="5" height="10" viewBox="0 0 5 10"><path d="M0 3h5L2.500 .5zM0 7h5L2.500 9.500z" fill="#5a6670"/></svg>
<span class="a t" style="left:520.0px;top:187.0px;font-size:9.5px;line-height:12px;color:#000;transform:scaleX(0.873);transform-origin:0 0;">Take Profit:</span>
<div class="a" style="left:567.5px;top:185.5px;width:66px;height:14.5px;background:#fff;border:1px solid #e2e3ea;border-top-color:#abadb3"></div>
<span class="a t" style="left:604.0px;top:187.0px;font-size:9.5px;line-height:12px;color:#000;transform:scaleX(0.860);transform-origin:0 0;">0.0000</span>
<div class="a" style="left:633.5px;top:185.5px;width:12.5px;height:14.5px;background:linear-gradient(#f2f2f2,#d8d8d8);border:1px solid #aeb3b9;border-radius:1.500px"></div>
<div class="a" style="left:634.5px;top:192.5px;width:10.5px;height:1px;background:#b5b9be"></div>
<svg style="left:637.3px;top:187.8px" width="5" height="10" viewBox="0 0 5 10"><path d="M0 3h5L2.500 .5zM0 7h5L2.500 9.500z" fill="#5a6670"/></svg>
<span class="a t" style="left:361.0px;top:206.4px;font-size:9.5px;line-height:12px;color:#000;transform:scaleX(0.833);transform-origin:0 0;">Comment:</span>
<div class="a" style="left:404.5px;top:205.5px;width:242px;height:14px;background:#fff;border:1px solid #e2e3ea;border-top-color:#abadb3"></div>
<span class="a t" style="left:377.0px;top:226.3px;font-size:9.5px;line-height:12px;color:#000;transform:scaleX(0.882);transform-origin:0 0;">Type:</span>
<div class="a" style="left:404.5px;top:224.5px;width:242.5px;height:15.5px;background:linear-gradient(#f4f4f4 0,#ebebeb 48%,#dddddd 52%,#d2d2d2 100%);border:1px solid #707070;border-radius:2.500px;box-shadow:inset 0 0 0 1px rgba(255,255,255,.7)"></div>
<span class="a t" style="left:407.0px;top:226.5px;font-size:9.5px;line-height:12px;color:#000;transform:scaleX(0.871);transform-origin:0 0;">Instant Execution</span>
<svg style="left:638.3px;top:231.2px" width="4.500" height="2.700" viewBox="0 0 5 3"><path d="M0 0h5L2.5 3z" fill="#111"/></svg>
<div class="a" style="left:331px;top:252px;width:321px;height:138.5px;border:1px solid #d5d5d5;border-radius:3px;box-shadow:inset 1px 1px 0 #fff, 1px 1px 0 #fff"></div>
<div class="a" style="left:335px;top:246px;width:68px;height:10px;background:#f0f0f0"></div>
<span class="a t" style="left:337.0px;top:245.5px;font-size:9.5px;line-height:12px;color:#000;transform:scaleX(0.885);transform-origin:0 0;">Instant Execution</span>
<span class="a t" style="left:424.0px;top:266.0px;font-size:21px;line-height:27px;color:#000;transform:scaleX(0.928);transform-origin:0 0;">1.3392 / 1.3395</span>
<div class="a" style="left:343px;top:301.5px;width:139px;height:16px;background:#ff8181;border:1px solid #7a7a7a;border-radius:3px;box-shadow:inset 0 0 0 1px rgba(255,255,255,.55)"></div>
<span class="a t" style="left:406.0px;top:303.5px;font-size:9.5px;line-height:12px;color:#000;transform:scaleX(0.789);transform-origin:0 0;">Sell</span>
<div class="a" style="left:500.5px;top:301.5px;width:139.5px;height:16px;background:#9ab5ff;border:1px solid #7a7a7a;border-radius:3px;box-shadow:inset 0 0 0 1px rgba(255,255,255,.55)"></div>
<span class="a t" style="left:562.0px;top:303.5px;font-size:9.5px;line-height:12px;color:#000;transform:scaleX(0.885);transform-origin:0 0;">Buy</span>
<div class="a" style="left:332.5px;top:320px;width:320px;height:23.5px;border:1.300px solid #e0282c"></div>
<div class="a" style="left:343px;top:324px;width:297px;height:14.5px;background:#ffff80;border:1px solid #7a7a7a;border-radius:3px;box-shadow:inset 0 0 0 1px rgba(255,255,255,.55)"></div>
<span class="a t" style="left:405.0px;top:325.3px;font-size:9.5px;line-height:12px;color:#000;transform:scaleX(0.849);transform-origin:0 0;">Close #83665158 buy 1.00 EURUSD <u>a</u>t 1.33920</span>
<div class="a" style="left:343px;top:351px;width:9px;height:9px;background:linear-gradient(135deg,#e3e3e3,#fdfdfd);border:1px solid #8e8f8f"></div>
<span class="a t" style="left:354.0px;top:349.5px;font-size:9.5px;line-height:12px;color:#000;transform:scaleX(0.839);transform-origin:0 0;">Enable maximum deviation from quoted price</span>
<span class="a t" style="left:423.0px;top:369.8px;font-size:9.5px;line-height:12px;color:#000;transform:scaleX(0.846);transform-origin:0 0;">Maximum deviation:</span>
<div class="a" style="left:502.5px;top:368px;width:45px;height:15.5px;background:#f4f4f4;border:1px solid #c4c4c4"></div>
<span class="a t" style="left:506.0px;top:370.0px;font-size:9.5px;line-height:12px;color:#8a8a8a;transform:scaleX(0.850);transform-origin:0 0;">0</span>
<svg style="left:537.500px;top:374.500px" width="5" height="3" viewBox="0 0 5 3"><path d="M0 0h5L2.500 3z" fill="#8a8a8a"/></svg>
<span class="a t" style="left:551.0px;top:370.0px;font-size:9.5px;line-height:12px;color:#000;transform:scaleX(0.832);transform-origin:0 0;">pips</span>
</body></html>
